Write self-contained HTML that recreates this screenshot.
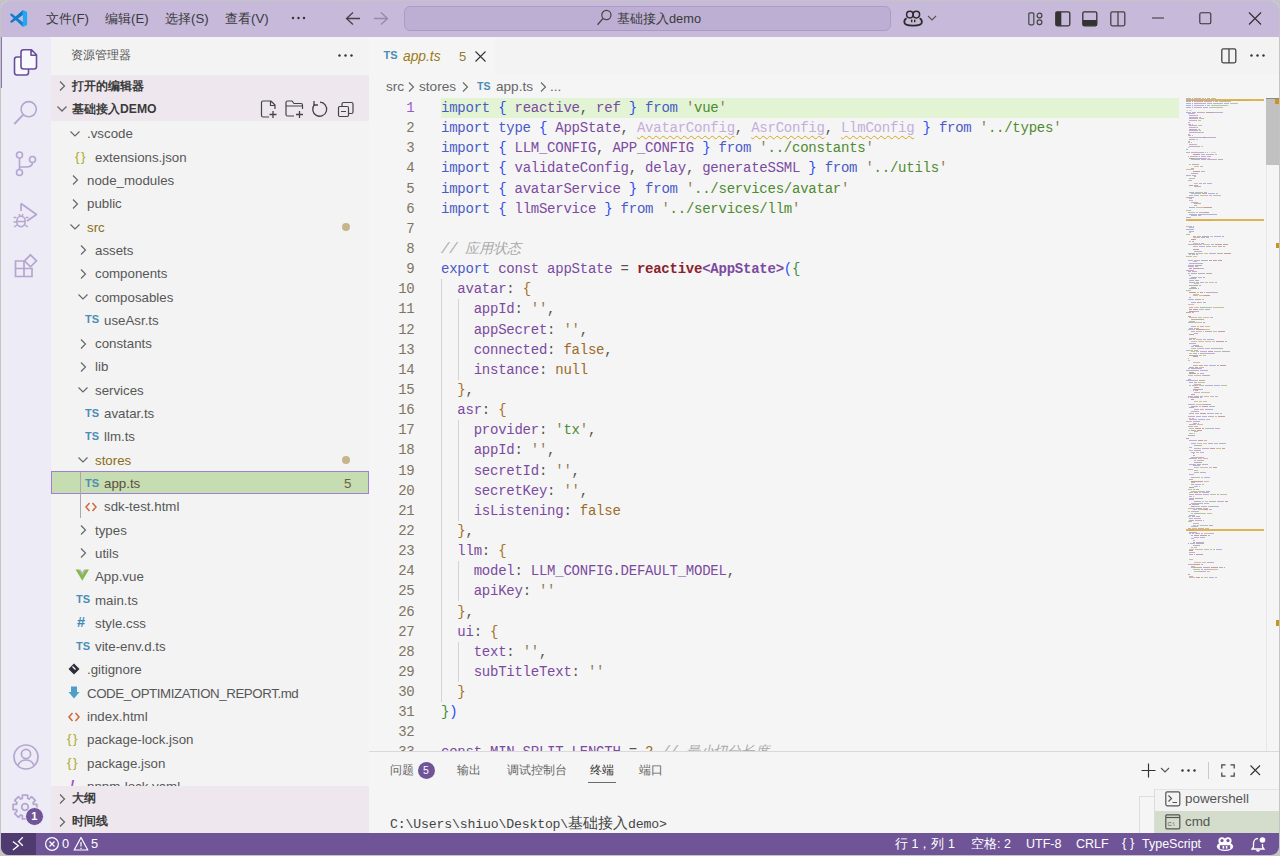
<!DOCTYPE html><html><head><meta charset="utf-8"><style>
*{margin:0;padding:0;box-sizing:border-box}
html,body{width:1280px;height:856px;overflow:hidden;background:#c4c4c4}
body{font-family:"Liberation Sans",sans-serif;position:relative;color:#3b3b3b}
.a{position:absolute}
svg{position:absolute;overflow:visible}
.win{position:absolute;left:0;top:0;width:1280px;height:856px;clip-path:inset(1px 1px 1px 1px round 8px);background:#f5f5f5}
.t{position:absolute;white-space:nowrap}
.row{position:absolute;left:51px;width:318px;height:23.3px;line-height:23.3px;font-size:13.3px;color:#424242;white-space:nowrap}
.code{position:absolute;font-family:"Liberation Mono",monospace;font-size:14px;letter-spacing:-0.24px;white-space:pre;height:20.14px;line-height:20.14px}
.ln{position:absolute;left:368px;width:46px;text-align:right;font-family:"Liberation Mono",monospace;font-size:14px;letter-spacing:-0.24px;color:#7f7461;height:20.14px;line-height:20.14px}
</style></head><body>
<div class="win">
<div class="a" style="left:0px;top:0px;width:1280px;height:37px;background:#c6b9da;"></div>
<div class="a" style="left:0px;top:37px;width:50.5px;height:796px;background:#edebf5;"></div>
<div class="a" style="left:50.5px;top:37px;width:318.0px;height:796px;background:#f3f3f3;"></div>
<div class="a" style="left:368.5px;top:37px;width:911.5px;height:37px;background:#f3f3f3;"></div>
<div class="a" style="left:368.5px;top:37px;width:126.5px;height:37px;background:#f5f5f5;"></div>
<div class="a" style="left:368.5px;top:74px;width:911.5px;height:677px;background:#f5f5f5;"></div>
<div class="a" style="left:368.5px;top:751px;width:911.5px;height:82px;background:#f5f5f5;"></div>
<div class="a" style="left:368.5px;top:751px;width:911.5px;height:1px;background:#d9d9d9;"></div>
<div class="a" style="left:0px;top:833px;width:1280px;height:23px;background:#6f5497;"></div>
<div class="a" style="left:0px;top:833px;width:36px;height:23px;background:#4f3b70;"></div>
<svg style="left:10px;top:10px;" width="18" height="18" viewBox="0 0 18 18"><path d="M12.9 0 L12.9 4.9 L1.8 12.7 Q0.6 13 0.1 11.6 Z" fill="#1178c8"/>
<path d="M1.8 3.6 Q0.6 3.4 0.1 5 L12.9 16.8 V12.3 Z" fill="#0e80d2"/>
<path d="M12.9 0 L17.1 2.1 V14.9 L12.9 17 Z" fill="#22a7f2"/></svg>
<div class="t" style="left:46px;top:10.260000000000002px;height:18.479999999999997px;line-height:18.479999999999997px;font-size:13.2px;color:#3a3a3a;">文件(F)</div>
<div class="t" style="left:105px;top:10.260000000000002px;height:18.479999999999997px;line-height:18.479999999999997px;font-size:13.2px;color:#3a3a3a;">编辑(E)</div>
<div class="t" style="left:165px;top:10.260000000000002px;height:18.479999999999997px;line-height:18.479999999999997px;font-size:13.2px;color:#3a3a3a;">选择(S)</div>
<div class="t" style="left:225px;top:10.260000000000002px;height:18.479999999999997px;line-height:18.479999999999997px;font-size:13.2px;color:#3a3a3a;">查看(V)</div>
<svg style="left:290px;top:15px;" width="18" height="6" viewBox="0 0 18 6"><circle cx="3" cy="3" r="1.2" fill="#333"/><circle cx="8.5" cy="3" r="1.2" fill="#333"/><circle cx="14" cy="3" r="1.2" fill="#333"/></svg>
<svg style="left:344px;top:11px;" width="18" height="15" viewBox="0 0 18 15"><path d="M9 1.5 L2.5 7.5 L9 13.5 M2.5 7.5 H16" stroke="#444" stroke-width="1.3" fill="none"/></svg>
<svg style="left:372px;top:11px;" width="18" height="15" viewBox="0 0 18 15"><path d="M9 1.5 L15.5 7.5 L9 13.5 M15.5 7.5 H2" stroke="#958aa8" stroke-width="1.3" fill="none"/></svg>
<div class="a" style="left:403.5px;top:6px;width:487.5px;height:24.5px;background:#bdafd3;border:1px solid #ab9bc4;border-radius:6px;"></div>
<svg style="left:596px;top:10px;" width="18" height="17" viewBox="0 0 18 17"><circle cx="10.4" cy="5" r="4.6" stroke="#444" stroke-width="1.2" fill="none"/><path d="M7.1 8.4 L1.5 14.8" stroke="#444" stroke-width="1.3"/></svg>
<div class="t" style="left:617px;top:10.040000000000001px;height:17.919999999999998px;line-height:17.919999999999998px;font-size:12.8px;color:#3a3a3a;">基础接入demo</div>
<svg style="left:903px;top:10px;" width="20" height="17" viewBox="0 0 20 17"><circle cx="6.9" cy="4.6" r="3.3" stroke="#2b2b2b" stroke-width="1.5" fill="none"/><circle cx="13.3" cy="4.6" r="3.3" stroke="#2b2b2b" stroke-width="1.5" fill="none"/>
<path d="M3.6 8.2 C1.8 9 1.3 10.5 1.3 12 C1.3 14.5 5 15.6 10.1 15.6 C15.2 15.6 18.9 14.5 18.9 12 C18.9 10.5 18.4 9 16.6 8.2" stroke="#2b2b2b" stroke-width="1.8" fill="none"/>
<rect x="8" y="9.6" width="1.4" height="2.6" fill="#2b2b2b"/><rect x="11" y="9.6" width="1.4" height="2.6" fill="#2b2b2b"/></svg>
<svg style="left:927px;top:14px;" width="10" height="8" viewBox="0 0 10 8"><path d="M1 2 L5 6 L9 2" stroke="#555" stroke-width="1.1" fill="none"/></svg>
<svg style="left:1028px;top:12px;" width="16" height="14" viewBox="0 0 16 14"><rect x="0.8" y="0.8" width="5" height="12" rx="1.2" stroke="#444" stroke-width="1.2" fill="none"/><circle cx="11.5" cy="3.5" r="2.4" stroke="#444" stroke-width="1.2" fill="none"/><circle cx="11.5" cy="10.3" r="2.4" stroke="#444" stroke-width="1.2" fill="none"/></svg>
<svg style="left:1055px;top:11px;" width="16" height="16" viewBox="0 0 16 16"><rect x="0.8" y="0.8" width="14" height="14" rx="1.5" stroke="#333" stroke-width="1.3" fill="none"/><rect x="0.8" y="0.8" width="5.5" height="14" fill="#333"/></svg>
<svg style="left:1082px;top:11px;" width="16" height="16" viewBox="0 0 16 16"><rect x="0.8" y="0.8" width="14" height="14" rx="1.5" stroke="#333" stroke-width="1.3" fill="none"/><rect x="0.8" y="9" width="14" height="5.8" fill="#333"/></svg>
<svg style="left:1110px;top:11px;" width="16" height="16" viewBox="0 0 16 16"><rect x="0.8" y="0.8" width="14" height="14" rx="1.5" stroke="#444" stroke-width="1.3" fill="none"/><path d="M8 1 V15" stroke="#444" stroke-width="1.3"/></svg>
<svg style="left:1152px;top:17px;" width="13" height="2" viewBox="0 0 13 2"><path d="M0 1 H12" stroke="#333" stroke-width="1.1"/></svg>
<svg style="left:1199px;top:12px;" width="13" height="13" viewBox="0 0 13 13"><rect x="0.8" y="0.8" width="11" height="11" rx="1.5" stroke="#333" stroke-width="1.1" fill="none"/></svg>
<svg style="left:1248px;top:12px;" width="14" height="13" viewBox="0 0 14 13"><path d="M1 0.5 L13 12.5 M13 0.5 L1 12.5" stroke="#333" stroke-width="1.2"/></svg>
<div class="a" style="left:1px;top:37px;width:1.2000000000000002px;height:51px;background:#8a76ad;"></div>
<svg style="left:12px;top:48px;" width="28" height="30" viewBox="0 0 28 30"><path d="M9 9 H5 Q2.5 9 2.5 11.5 V24.5 Q2.5 27 5 27 H14 Q16.5 27 16.5 24.5 V21" stroke="#6b4e9b" stroke-width="1.6" fill="#f9f8fc"/><path d="M11.5 1.8 H19.5 L24.5 6.8 V18.5 Q24.5 21 22 21 H11.5 Q9 21 9 18.5 V4.3 Q9 1.8 11.5 1.8 Z M19 2 V7.3 H24.3" stroke="#6b4e9b" stroke-width="1.6" fill="#f9f8fc" stroke-linejoin="round"/></svg>
<svg style="left:12px;top:97px;" width="28" height="30" viewBox="0 0 28 30"><circle cx="16.7" cy="12.2" r="7.6" stroke="#b4a6d0" stroke-width="1.6" fill="none"/><path d="M11.3 17.7 L2.3 27" stroke="#b4a6d0" stroke-width="1.8"/></svg>
<svg style="left:14px;top:150px;" width="24" height="28" viewBox="0 0 24 28"><circle cx="5.5" cy="5" r="3" stroke="#b4a6d0" stroke-width="1.6" fill="none"/><circle cx="5.5" cy="22.5" r="3" stroke="#b4a6d0" stroke-width="1.6" fill="none"/><circle cx="18.5" cy="9.5" r="3" stroke="#b4a6d0" stroke-width="1.6" fill="none"/><path d="M5.5 8 V19.5 M18.5 12.5 Q18.5 17 12 17 H5.5" stroke="#b4a6d0" stroke-width="1.6" fill="none"/></svg>
<svg style="left:12px;top:202px;" width="28" height="28" viewBox="0 0 28 28"><path d="M9 1.5 L24.5 12.5 L15 19 M9 1.5 V9" stroke="#b4a6d0" stroke-width="1.7" fill="none" stroke-linejoin="round"/><ellipse cx="9" cy="19.5" rx="4.2" ry="5.2" stroke="#b4a6d0" stroke-width="1.6" fill="none"/><path d="M1.5 15.5 H4.5 M1.5 20 H4.8 M2 25 L5 23 M13.5 15.5 H16.5 M5 19.5 H13 M7 12 L8 14.5 M11 12 L10 14.5 M13 23 L16 25" stroke="#b4a6d0" stroke-width="1.5" fill="none"/></svg>
<svg style="left:13px;top:253px;" width="26" height="26" viewBox="0 0 26 26"><path d="M2.5 8 H11 V23.5 H2.5 Z M2.5 15.5 H19 V23.5 H11 M11 15.5 V8" stroke="#b4a6d0" stroke-width="1.7" fill="none"/><path d="M17.5 1.8 L23.5 7.8 L17.5 13.8 L11.5 7.8 Z" stroke="#b4a6d0" stroke-width="1.7" fill="none"/></svg>
<svg style="left:12px;top:743px;" width="28" height="28" viewBox="0 0 28 28"><circle cx="14" cy="14" r="12" stroke="#b4a6d0" stroke-width="1.7" fill="none"/><circle cx="14" cy="11" r="4.6" stroke="#b4a6d0" stroke-width="1.7" fill="none"/><path d="M6 22.5 Q8 17 14 17 Q20 17 22 22.5" stroke="#b4a6d0" stroke-width="1.7" fill="none"/></svg>
<svg style="left:12px;top:794px;" width="26" height="26" viewBox="0 0 26 26"><path d="M21.60 10.34 L24.91 10.34 L24.91 15.66 L21.60 15.66 L20.96 17.20 L23.30 19.54 L19.54 23.30 L17.20 20.96 L15.66 21.60 L15.66 24.91 L10.34 24.91 L10.34 21.60 L8.80 20.96 L6.46 23.30 L2.70 19.54 L5.04 17.20 L4.40 15.66 L1.09 15.66 L1.09 10.34 L4.40 10.34 L5.04 8.80 L2.70 6.46 L6.46 2.70 L8.80 5.04 L10.34 4.40 L10.34 1.09 L15.66 1.09 L15.66 4.40 L17.20 5.04 L19.54 2.70 L23.30 6.46 L20.96 8.80 Z" stroke="#b4a6d0" stroke-width="1.7" fill="none" stroke-linejoin="round"/><circle cx="13" cy="13" r="3.3" stroke="#b4a6d0" stroke-width="1.7" fill="none"/></svg>
<div class="a" style="left:24.5px;top:806.5px;width:19.5px;height:19.5px;border-radius:50%;background:#6f5497;border:1.6px solid #edebf5;color:#fff;font-size:11px;font-weight:bold;text-align:center;line-height:16.3px">1</div>
<div class="t" style="left:71px;top:47.32px;height:17.36px;line-height:17.36px;font-size:12.4px;color:#555;">资源管理器</div>
<svg style="left:337px;top:53px;" width="18" height="5" viewBox="0 0 18 5"><circle cx="2.5" cy="2.5" r="1.2" fill="#333"/><circle cx="8.5" cy="2.5" r="1.2" fill="#333"/><circle cx="14.5" cy="2.5" r="1.2" fill="#333"/></svg>
<div class="a" style="left:50.5px;top:74.7px;width:318.0px;height:46.099999999999994px;background:#eee8ee;"></div>
<div class="a" style="left:50.5px;top:786px;width:318.0px;height:47px;background:#eee8ee;"></div>
<svg style="left:58px;top:80.2px;" width="8" height="12" viewBox="0 0 8 12"><path d="M2 1.5 L6.5 6 L2 10.5" stroke="#666" stroke-width="1.25" fill="none"/></svg>
<div class="t" style="left:72px;top:77.66px;height:17.08px;line-height:17.08px;font-size:12.2px;color:#3b3b3b;font-weight:bold">打开的编辑器</div>
<svg style="left:56px;top:105.3px;" width="12" height="8" viewBox="0 0 12 8"><path d="M1.5 1.5 L6 6 L10.5 1.5" stroke="#666" stroke-width="1.25" fill="none"/></svg>
<div class="t" style="left:72px;top:100.75999999999999px;height:17.08px;line-height:17.08px;font-size:12.2px;color:#3b3b3b;font-weight:bold">基础接入DEMO</div>
<svg style="left:260px;top:100px;" width="18" height="19" viewBox="0 0 18 19"><path d="M11 1 H3 Q1.5 1 1.5 2.5 V15.5 Q1.5 17 3 17 H9 M11 1 L15 5 V9 M10.5 1.2 V5.5 H15" stroke="#444" stroke-width="1.2" fill="none"/><path d="M13 11 V18 M9.5 14.5 H16.5" stroke="#444" stroke-width="1.3"/></svg>
<svg style="left:285px;top:100px;" width="20" height="19" viewBox="0 0 20 19"><path d="M9 16 H2.5 Q1 16 1 14.5 V2.5 Q1 1 2.5 1 H7 L9 3.5 H16 Q17.5 3.5 17.5 5 V9 M1 6 H17" stroke="#444" stroke-width="1.2" fill="none"/><path d="M14.5 11 V18 M11 14.5 H18" stroke="#444" stroke-width="1.3"/></svg>
<svg style="left:311px;top:100px;" width="18" height="19" viewBox="0 0 18 19"><path d="M3.5 4.5 A7 7 0 1 0 9 2.2" stroke="#444" stroke-width="1.3" fill="none"/><path d="M3 1 V5 H7" stroke="#444" stroke-width="1.3" fill="none"/></svg>
<svg style="left:337px;top:101px;" width="18" height="17" viewBox="0 0 18 17"><rect x="1.5" y="5.5" width="10" height="10" rx="1.2" stroke="#444" stroke-width="1.2" fill="none"/><path d="M5 5.5 V3 Q5 1.5 6.5 1.5 H14.5 Q16 1.5 16 3 V11 Q16 12.5 14.5 12.5 H11.5 M4 10.5 H9" stroke="#444" stroke-width="1.2" fill="none"/></svg>
<div class="a" style="left:0;top:120.8px;width:369px;height:665.2px;overflow:hidden">
<svg style="left:69px;top:9.054999999999993px" width="12" height="8" viewBox="0 0 12 8"><path d="M1.5 1.5 L6 6 L10.5 1.5" stroke="#666" stroke-width="1.15" fill="none"/></svg>
<div class="t" style="left:87px;top:1.5549999999999926px;height:23px;line-height:23px;font-size:13.3px;color:#575757;">.vscode</div>
<div class="t" style="left:75px;top:26.864999999999995px;height:18px;line-height:18px;font-size:13.5px;color:#b0aa1e;letter-spacing:1.6px">{}</div>
<div class="t" style="left:95px;top:24.864999999999995px;height:23px;line-height:23px;font-size:13.3px;color:#575757;">extensions.json</div>
<svg style="left:71px;top:53.675px" width="8" height="12" viewBox="0 0 8 12"><path d="M2 1.5 L6.5 6 L2 10.5" stroke="#666" stroke-width="1.15" fill="none"/></svg>
<div class="t" style="left:87px;top:48.175px;height:23px;line-height:23px;font-size:13.3px;color:#575757;">node_modules</div>
<svg style="left:71px;top:76.985px" width="8" height="12" viewBox="0 0 8 12"><path d="M2 1.5 L6.5 6 L2 10.5" stroke="#666" stroke-width="1.15" fill="none"/></svg>
<div class="t" style="left:87px;top:71.485px;height:23px;line-height:23px;font-size:13.3px;color:#575757;">public</div>
<svg style="left:69px;top:102.295px" width="12" height="8" viewBox="0 0 12 8"><path d="M1.5 1.5 L6 6 L10.5 1.5" stroke="#666" stroke-width="1.15" fill="none"/></svg>
<div class="t" style="left:87px;top:94.795px;height:23px;line-height:23px;font-size:13.3px;color:#8b6d16;">src</div>
<div class="a" style="left:342px;top:102.295px;width:8px;height:8px;border-radius:50%;background:#c6b48a"></div>
<svg style="left:79px;top:123.60500000000002px" width="8" height="12" viewBox="0 0 8 12"><path d="M2 1.5 L6.5 6 L2 10.5" stroke="#666" stroke-width="1.15" fill="none"/></svg>
<div class="t" style="left:95px;top:118.10500000000002px;height:23px;line-height:23px;font-size:13.3px;color:#575757;">assets</div>
<svg style="left:79px;top:146.91499999999996px" width="8" height="12" viewBox="0 0 8 12"><path d="M2 1.5 L6.5 6 L2 10.5" stroke="#666" stroke-width="1.15" fill="none"/></svg>
<div class="t" style="left:95px;top:141.41499999999996px;height:23px;line-height:23px;font-size:13.3px;color:#575757;">components</div>
<svg style="left:77px;top:172.22499999999997px" width="12" height="8" viewBox="0 0 12 8"><path d="M1.5 1.5 L6 6 L10.5 1.5" stroke="#666" stroke-width="1.15" fill="none"/></svg>
<div class="t" style="left:95px;top:164.72499999999997px;height:23px;line-height:23px;font-size:13.3px;color:#575757;">composables</div>
<div class="t" style="left:85px;top:190.53499999999997px;height:16px;line-height:16px;font-size:11px;color:#4d8cb5;font-weight:bold">TS</div>
<div class="t" style="left:104px;top:188.03499999999997px;height:23px;line-height:23px;font-size:13.3px;color:#575757;">useAsr.ts</div>
<svg style="left:79px;top:216.84499999999997px" width="8" height="12" viewBox="0 0 8 12"><path d="M2 1.5 L6.5 6 L2 10.5" stroke="#666" stroke-width="1.15" fill="none"/></svg>
<div class="t" style="left:95px;top:211.34499999999997px;height:23px;line-height:23px;font-size:13.3px;color:#575757;">constants</div>
<svg style="left:79px;top:240.15499999999997px" width="8" height="12" viewBox="0 0 8 12"><path d="M2 1.5 L6.5 6 L2 10.5" stroke="#666" stroke-width="1.15" fill="none"/></svg>
<div class="t" style="left:95px;top:234.65499999999997px;height:23px;line-height:23px;font-size:13.3px;color:#575757;">lib</div>
<svg style="left:77px;top:265.4649999999999px" width="12" height="8" viewBox="0 0 12 8"><path d="M1.5 1.5 L6 6 L10.5 1.5" stroke="#666" stroke-width="1.15" fill="none"/></svg>
<div class="t" style="left:95px;top:257.9649999999999px;height:23px;line-height:23px;font-size:13.3px;color:#575757;">services</div>
<div class="t" style="left:85px;top:283.7749999999999px;height:16px;line-height:16px;font-size:11px;color:#4d8cb5;font-weight:bold">TS</div>
<div class="t" style="left:104px;top:281.2749999999999px;height:23px;line-height:23px;font-size:13.3px;color:#575757;">avatar.ts</div>
<div class="t" style="left:85px;top:307.0849999999999px;height:16px;line-height:16px;font-size:11px;color:#4d8cb5;font-weight:bold">TS</div>
<div class="t" style="left:104px;top:304.5849999999999px;height:23px;line-height:23px;font-size:13.3px;color:#575757;">llm.ts</div>
<svg style="left:77px;top:335.3949999999999px" width="12" height="8" viewBox="0 0 12 8"><path d="M1.5 1.5 L6 6 L10.5 1.5" stroke="#666" stroke-width="1.15" fill="none"/></svg>
<div class="t" style="left:95px;top:327.8949999999999px;height:23px;line-height:23px;font-size:13.3px;color:#8b6d16;">stores</div>
<div class="a" style="left:342px;top:335.3949999999999px;width:8px;height:8px;border-radius:50%;background:#c6b48a"></div>
<div class="a" style="left:51px;top:350.54999999999995px;width:317.5px;height:22.6px;background:#c6dcb1;border:1px solid #9e80d6"></div>
<div class="t" style="left:85px;top:353.7049999999999px;height:16px;line-height:16px;font-size:11px;color:#4d8cb5;font-weight:bold">TS</div>
<div class="t" style="left:104px;top:351.2049999999999px;height:23px;line-height:23px;font-size:13.3px;color:#5b4f3c;">app.ts</div>
<div class="t" style="left:344px;top:351.2049999999999px;height:23px;line-height:23px;font-size:13.3px;color:#6b5f40">5</div>
<svg style="left:85px;top:381.01499999999993px" width="12" height="10" viewBox="0 0 12 10"><path d="M4.5 1 L1 5 L4.5 9 M7.5 1 L11 5 L7.5 9" stroke="#d0673a" stroke-width="1.5" fill="none"/></svg>
<div class="t" style="left:104px;top:374.51499999999993px;height:23px;line-height:23px;font-size:13.3px;color:#575757;">sdk-test.html</div>
<svg style="left:79px;top:403.325px" width="8" height="12" viewBox="0 0 8 12"><path d="M2 1.5 L6.5 6 L2 10.5" stroke="#666" stroke-width="1.15" fill="none"/></svg>
<div class="t" style="left:95px;top:397.825px;height:23px;line-height:23px;font-size:13.3px;color:#575757;">types</div>
<svg style="left:79px;top:426.63499999999993px" width="8" height="12" viewBox="0 0 8 12"><path d="M2 1.5 L6.5 6 L2 10.5" stroke="#666" stroke-width="1.15" fill="none"/></svg>
<div class="t" style="left:95px;top:421.13499999999993px;height:23px;line-height:23px;font-size:13.3px;color:#575757;">utils</div>
<svg style="left:75px;top:447.945px;transform:scale(1.12);transform-origin:0 0" width="13" height="11" viewBox="0 0 13 11"><path d="M0.5 0.5 H3.5 L6.5 5.5 L9.5 0.5 H12.5 L6.5 10.5 Z" fill="#86b949"/><path d="M3.5 0.5 H5 L6.5 3 L8 0.5 H9.5 L6.5 5.5 Z" fill="#34495e" opacity="0.35"/></svg>
<div class="t" style="left:95px;top:444.445px;height:23px;line-height:23px;font-size:13.3px;color:#575757;">App.vue</div>
<div class="t" style="left:76px;top:470.25499999999994px;height:16px;line-height:16px;font-size:11px;color:#4d8cb5;font-weight:bold">TS</div>
<div class="t" style="left:95px;top:467.75499999999994px;height:23px;line-height:23px;font-size:13.3px;color:#575757;">main.ts</div>
<div class="t" style="left:77px;top:493.565px;height:16px;line-height:16px;font-size:14.5px;color:#4289b9;font-weight:bold">#</div>
<div class="t" style="left:95px;top:491.065px;height:23px;line-height:23px;font-size:13.3px;color:#575757;">style.css</div>
<div class="t" style="left:76px;top:516.875px;height:16px;line-height:16px;font-size:11px;color:#4d8cb5;font-weight:bold">TS</div>
<div class="t" style="left:95px;top:514.375px;height:23px;line-height:23px;font-size:13.3px;color:#575757;">vite-env.d.ts</div>
<svg style="left:68px;top:542.1850000000001px" width="12" height="13" viewBox="0 0 12 13"><path d="M6 0.5 L11.5 6 L6 11.5 L0.5 6 Z" fill="#2d2d3a"/><path d="M4.5 3.5 L7.5 6.5" stroke="#fff" stroke-width="1.2"/></svg>
<div class="t" style="left:87px;top:537.6850000000001px;height:23px;line-height:23px;font-size:13.3px;color:#575757;">.gitignore</div>
<svg style="left:68px;top:565.495px" width="12" height="14" viewBox="0 0 12 14"><path d="M3 0.5 H9 V6 H11.5 L6 12.5 L0.5 6 H3 Z" fill="#4d9fc8"/></svg>
<div class="t" style="left:87px;top:560.995px;height:23px;line-height:23px;font-size:13.3px;color:#575757;letter-spacing:-0.42px;">CODE_OPTIMIZATION_REPORT.md</div>
<svg style="left:68px;top:590.8050000000001px" width="12" height="10" viewBox="0 0 12 10"><path d="M4.5 1 L1 5 L4.5 9 M7.5 1 L11 5 L7.5 9" stroke="#d0673a" stroke-width="1.5" fill="none"/></svg>
<div class="t" style="left:87px;top:584.3050000000001px;height:23px;line-height:23px;font-size:13.3px;color:#575757;">index.html</div>
<div class="t" style="left:67px;top:609.615px;height:18px;line-height:18px;font-size:13.5px;color:#b0aa1e;letter-spacing:1.6px">{}</div>
<div class="t" style="left:87px;top:607.615px;height:23px;line-height:23px;font-size:13.3px;color:#575757;">package-lock.json</div>
<div class="t" style="left:67px;top:632.9250000000001px;height:18px;line-height:18px;font-size:13.5px;color:#b0aa1e;letter-spacing:1.6px">{}</div>
<div class="t" style="left:87px;top:630.9250000000001px;height:23px;line-height:23px;font-size:13.3px;color:#575757;">package.json</div>
<div class="t" style="left:70px;top:655.735px;height:16px;line-height:16px;font-size:13px;color:#a04fc8;font-weight:bold;font-style:italic">!</div>
<div class="t" style="left:87px;top:654.235px;height:23px;line-height:23px;font-size:13.3px;color:#575757;">pnpm-lock.yaml</div>
<div class="a" style="left:80px;top:351.04999999999995px;width:1px;height:46.62px;background:#a9a9a9"></div>
</div>
<svg style="left:58px;top:792.5px;" width="8" height="12" viewBox="0 0 8 12"><path d="M2 1.5 L6.5 6 L2 10.5" stroke="#666" stroke-width="1.25" fill="none"/></svg>
<div class="t" style="left:72px;top:790.26px;height:17.08px;line-height:17.08px;font-size:12.2px;color:#3b3b3b;font-weight:bold">大纲</div>
<svg style="left:58px;top:816px;" width="8" height="12" viewBox="0 0 8 12"><path d="M2 1.5 L6.5 6 L2 10.5" stroke="#666" stroke-width="1.25" fill="none"/></svg>
<div class="t" style="left:72px;top:813.46px;height:17.08px;line-height:17.08px;font-size:12.2px;color:#3b3b3b;font-weight:bold">时间线</div>
<div class="t" style="left:383.5px;top:48.3px;height:15.399999999999999px;line-height:15.399999999999999px;font-size:11px;color:#4d8cb5;font-weight:bold">TS</div>
<div class="t" style="left:403px;top:47.34px;height:19.32px;line-height:19.32px;font-size:13.8px;color:#9a7b17;font-style:italic">app.ts</div>
<div class="t" style="left:459px;top:47.9px;height:18.2px;line-height:18.2px;font-size:13px;color:#8f7a2e;">5</div>
<svg style="left:475px;top:51px;" width="11" height="11" viewBox="0 0 11 11"><path d="M0.5 0.5 L10.5 10.5 M10.5 0.5 L0.5 10.5" stroke="#333" stroke-width="1.1"/></svg>
<svg style="left:1221px;top:48px;" width="16" height="16" viewBox="0 0 16 16"><rect x="0.8" y="0.8" width="14" height="14" rx="1.5" stroke="#444" stroke-width="1.3" fill="none"/><path d="M8 1 V15" stroke="#444" stroke-width="1.3"/></svg>
<svg style="left:1249px;top:53px;" width="18" height="5" viewBox="0 0 18 5"><circle cx="2.5" cy="2.5" r="1.2" fill="#333"/><circle cx="8.5" cy="2.5" r="1.2" fill="#333"/><circle cx="14.5" cy="2.5" r="1.2" fill="#333"/></svg>
<div class="t" style="left:386px;top:77.48px;height:19.04px;line-height:19.04px;font-size:13.6px;color:#666;">src</div>
<svg style="left:407px;top:81px;" width="8" height="12" viewBox="0 0 8 12"><path d="M2 1.5 L6.5 6 L2 10.5" stroke="#666" stroke-width="1.1" fill="none"/></svg>
<div class="t" style="left:419px;top:77.48px;height:19.04px;line-height:19.04px;font-size:13.6px;color:#666;">stores</div>
<svg style="left:461px;top:81px;" width="8" height="12" viewBox="0 0 8 12"><path d="M2 1.5 L6.5 6 L2 10.5" stroke="#666" stroke-width="1.1" fill="none"/></svg>
<div class="t" style="left:477px;top:78.65px;height:14.7px;line-height:14.7px;font-size:10.5px;color:#4d8cb5;font-weight:bold">TS</div>
<div class="t" style="left:496px;top:77.48px;height:19.04px;line-height:19.04px;font-size:13.6px;color:#666;">app.ts</div>
<svg style="left:539px;top:81px;" width="8" height="12" viewBox="0 0 8 12"><path d="M2 1.5 L6.5 6 L2 10.5" stroke="#666" stroke-width="1.1" fill="none"/></svg>
<div class="t" style="left:550px;top:77.48px;height:19.04px;line-height:19.04px;font-size:13.6px;color:#666;">...</div>
<div class="a" style="left:441px;top:98.0px;width:738px;height:20.14px;background:#e2f4d4;"></div>
<div class="a" style="left:368.5px;top:74px;width:817px;height:677px;overflow:hidden">
<div class="a" style="left:72.5px;top:205.26px;width:1px;height:422.94px;background:#d4d4d4"></div>
<div class="a" style="left:89.0px;top:225.39999999999998px;width:1px;height:80.56px;background:#d4d4d4"></div>
<div class="a" style="left:89.0px;top:346.24px;width:1px;height:100.7px;background:#d4d4d4"></div>
<div class="a" style="left:89.0px;top:487.22px;width:1px;height:40.28px;background:#d4d4d4"></div>
<div class="a" style="left:89.0px;top:567.78px;width:1px;height:40.28px;background:#d4d4d4"></div>
<div class="ln" style="left:0px;top:24.0px;color:#9b59d0">1</div>
<div class="code" style="left:72.5px;top:24.0px"><span style="color:#4a5bc6;">import </span><span style="color:#2f4cf0;">{ </span><span style="color:#7b4aa0;">reactive</span><span style="color:#555;">, </span><span style="color:#7b4aa0;">ref</span><span style="color:#2f4cf0;"> } </span><span style="color:#4a5bc6;">from </span><span style="color:#8f7b55;">&#x27;</span><span style="color:#4f8a2f;">vue</span><span style="color:#8f7b55;">&#x27;</span></div>
<div class="ln" style="left:0px;top:44.14px;color:#7f7461">2</div>
<div class="code" style="left:72.5px;top:44.14px"><span style="color:#4a5bc6;">import </span><span style="color:#4a5bc6;">type </span><span style="color:#2f4cf0;">{ </span><span style="color:#7b4aa0;">AppState</span><span style="color:#555;">, </span><span style="color:#c4aedb;text-decoration:underline wavy #d9a422;text-decoration-thickness:1px;text-underline-offset:3px">AvatarConfig</span><span style="color:#555;">, </span><span style="color:#c4aedb;text-decoration:underline wavy #d9a422;text-decoration-thickness:1px;text-underline-offset:3px">AsrConfig</span><span style="color:#555;">, </span><span style="color:#c4aedb;text-decoration:underline wavy #d9a422;text-decoration-thickness:1px;text-underline-offset:3px">LlmConfig</span><span style="color:#2f4cf0;"> } </span><span style="color:#4a5bc6;">from </span><span style="color:#8f7b55;">&#x27;</span><span style="color:#4f8a2f;">../types</span><span style="color:#8f7b55;">&#x27;</span></div>
<div class="ln" style="left:0px;top:64.28px;color:#7f7461">3</div>
<div class="code" style="left:72.5px;top:64.28px"><span style="color:#4a5bc6;">import </span><span style="color:#2f4cf0;">{ </span><span style="color:#7b4aa0;">LLM_CONFIG</span><span style="color:#555;">, </span><span style="color:#7b4aa0;">APP_CONFIG</span><span style="color:#2f4cf0;"> } </span><span style="color:#4a5bc6;">from </span><span style="color:#8f7b55;">&#x27;</span><span style="color:#4f8a2f;">../constants</span><span style="color:#8f7b55;">&#x27;</span></div>
<div class="ln" style="left:0px;top:84.42000000000002px;color:#7f7461">4</div>
<div class="code" style="left:72.5px;top:84.42000000000002px"><span style="color:#4a5bc6;">import </span><span style="color:#2f4cf0;">{ </span><span style="color:#7b4aa0;">validateConfig</span><span style="color:#555;">, </span><span style="color:#7b4aa0;">delay</span><span style="color:#555;">, </span><span style="color:#7b4aa0;">generateSSML</span><span style="color:#2f4cf0;"> } </span><span style="color:#4a5bc6;">from </span><span style="color:#8f7b55;">&#x27;</span><span style="color:#4f8a2f;">../utils</span><span style="color:#8f7b55;">&#x27;</span></div>
<div class="ln" style="left:0px;top:104.56px;color:#7f7461">5</div>
<div class="code" style="left:72.5px;top:104.56px"><span style="color:#4a5bc6;">import </span><span style="color:#2f4cf0;">{ </span><span style="color:#7b4aa0;">avatarService</span><span style="color:#2f4cf0;"> } </span><span style="color:#4a5bc6;">from </span><span style="color:#8f7b55;">&#x27;</span><span style="color:#4f8a2f;">../services/avatar</span><span style="color:#8f7b55;">&#x27;</span></div>
<div class="ln" style="left:0px;top:124.69999999999999px;color:#7f7461">6</div>
<div class="code" style="left:72.5px;top:124.69999999999999px"><span style="color:#4a5bc6;">import </span><span style="color:#2f4cf0;">{ </span><span style="color:#7b4aa0;">llmService</span><span style="color:#2f4cf0;"> } </span><span style="color:#4a5bc6;">from </span><span style="color:#8f7b55;">&#x27;</span><span style="color:#4f8a2f;">../services/llm</span><span style="color:#8f7b55;">&#x27;</span></div>
<div class="ln" style="left:0px;top:144.84px;color:#7f7461">7</div>
<div class="code" style="left:72.5px;top:144.84px"></div>
<div class="ln" style="left:0px;top:164.98000000000002px;color:#7f7461">8</div>
<div class="code" style="left:72.5px;top:164.98000000000002px"><span style="color:#a9a9a9;font-style:italic">// 应用状态</span></div>
<div class="ln" style="left:0px;top:185.12px;color:#7f7461">9</div>
<div class="code" style="left:72.5px;top:185.12px"><span style="color:#4a5bc6;">export </span><span style="color:#7b4aa0;">const </span><span style="color:#7b4aa0;">appState</span><span style="color:#555;"> = </span><span style="color:#8c1f2f;font-weight:bold">reactive</span><span style="color:#7b4aa0;font-weight:bold">&lt;</span><span style="color:#7b4aa0;font-weight:bold">AppState</span><span style="color:#7b4aa0;font-weight:bold">&gt;</span><span style="color:#2f4cf0;">(</span><span style="color:#3f8f3a;">{</span></div>
<div class="ln" style="left:0px;top:205.26px;color:#7f7461">10</div>
<div class="code" style="left:72.5px;top:205.26px"><span style="color:#7b4aa0;">  avatar</span><span style="color:#555;">: </span><span style="color:#a8701f;">{</span></div>
<div class="ln" style="left:0px;top:225.39999999999998px;color:#7f7461">11</div>
<div class="code" style="left:72.5px;top:225.39999999999998px"><span style="color:#7b4aa0;">    appId</span><span style="color:#555;">: </span><span style="color:#8f7b55;">&#x27;&#x27;</span><span style="color:#555;">,</span></div>
<div class="ln" style="left:0px;top:245.54000000000002px;color:#7f7461">12</div>
<div class="code" style="left:72.5px;top:245.54000000000002px"><span style="color:#7b4aa0;">    appSecret</span><span style="color:#555;">: </span><span style="color:#8f7b55;">&#x27;&#x27;</span><span style="color:#555;">,</span></div>
<div class="ln" style="left:0px;top:265.68px;color:#7f7461">13</div>
<div class="code" style="left:72.5px;top:265.68px"><span style="color:#7b4aa0;">    connected</span><span style="color:#555;">: </span><span style="color:#9b6b2b;">false</span><span style="color:#555;">,</span></div>
<div class="ln" style="left:0px;top:285.82px;color:#7f7461">14</div>
<div class="code" style="left:72.5px;top:285.82px"><span style="color:#7b4aa0;">    instance</span><span style="color:#555;">: </span><span style="color:#9b6b2b;">null</span></div>
<div class="ln" style="left:0px;top:305.96000000000004px;color:#7f7461">15</div>
<div class="code" style="left:72.5px;top:305.96000000000004px"><span style="color:#a8701f;">  }</span><span style="color:#555;">,</span></div>
<div class="ln" style="left:0px;top:326.1px;color:#7f7461">16</div>
<div class="code" style="left:72.5px;top:326.1px"><span style="color:#7b4aa0;">  asr</span><span style="color:#555;">: </span><span style="color:#a8701f;">{</span></div>
<div class="ln" style="left:0px;top:346.24px;color:#7f7461">17</div>
<div class="code" style="left:72.5px;top:346.24px"><span style="color:#7b4aa0;">    provider</span><span style="color:#555;">: </span><span style="color:#8f7b55;">&#x27;</span><span style="color:#4f8a2f;">tx</span><span style="color:#8f7b55;">&#x27;</span><span style="color:#555;">,</span></div>
<div class="ln" style="left:0px;top:366.38px;color:#7f7461">18</div>
<div class="code" style="left:72.5px;top:366.38px"><span style="color:#7b4aa0;">    appId</span><span style="color:#555;">: </span><span style="color:#8f7b55;">&#x27;&#x27;</span><span style="color:#555;">,</span></div>
<div class="ln" style="left:0px;top:386.52px;color:#7f7461">19</div>
<div class="code" style="left:72.5px;top:386.52px"><span style="color:#7b4aa0;">    secretId</span><span style="color:#555;">: </span><span style="color:#8f7b55;">&#x27;&#x27;</span><span style="color:#555;">,</span></div>
<div class="ln" style="left:0px;top:406.66px;color:#7f7461">20</div>
<div class="code" style="left:72.5px;top:406.66px"><span style="color:#7b4aa0;">    secretKey</span><span style="color:#555;">: </span><span style="color:#8f7b55;">&#x27;&#x27;</span><span style="color:#555;">,</span></div>
<div class="ln" style="left:0px;top:426.8px;color:#7f7461">21</div>
<div class="code" style="left:72.5px;top:426.8px"><span style="color:#7b4aa0;">    isListening</span><span style="color:#555;">: </span><span style="color:#9b6b2b;">false</span></div>
<div class="ln" style="left:0px;top:446.94000000000005px;color:#7f7461">22</div>
<div class="code" style="left:72.5px;top:446.94000000000005px"><span style="color:#a8701f;">  }</span><span style="color:#555;">,</span></div>
<div class="ln" style="left:0px;top:467.08000000000004px;color:#7f7461">23</div>
<div class="code" style="left:72.5px;top:467.08000000000004px"><span style="color:#7b4aa0;">  llm</span><span style="color:#555;">: </span><span style="color:#a8701f;">{</span></div>
<div class="ln" style="left:0px;top:487.22px;color:#7f7461">24</div>
<div class="code" style="left:72.5px;top:487.22px"><span style="color:#7b4aa0;">    model</span><span style="color:#555;">: </span><span style="color:#7b4aa0;">LLM_CONFIG</span><span style="color:#555;">.</span><span style="color:#7b4aa0;">DEFAULT_MODEL</span><span style="color:#555;">,</span></div>
<div class="ln" style="left:0px;top:507.36px;color:#7f7461">25</div>
<div class="code" style="left:72.5px;top:507.36px"><span style="color:#7b4aa0;">    apiKey</span><span style="color:#555;">: </span><span style="color:#8f7b55;">&#x27;&#x27;</span></div>
<div class="ln" style="left:0px;top:527.5px;color:#7f7461">26</div>
<div class="code" style="left:72.5px;top:527.5px"><span style="color:#a8701f;">  }</span><span style="color:#555;">,</span></div>
<div class="ln" style="left:0px;top:547.64px;color:#7f7461">27</div>
<div class="code" style="left:72.5px;top:547.64px"><span style="color:#7b4aa0;">  ui</span><span style="color:#555;">: </span><span style="color:#a8701f;">{</span></div>
<div class="ln" style="left:0px;top:567.78px;color:#7f7461">28</div>
<div class="code" style="left:72.5px;top:567.78px"><span style="color:#7b4aa0;">    text</span><span style="color:#555;">: </span><span style="color:#8f7b55;">&#x27;&#x27;</span><span style="color:#555;">,</span></div>
<div class="ln" style="left:0px;top:587.9200000000001px;color:#7f7461">29</div>
<div class="code" style="left:72.5px;top:587.9200000000001px"><span style="color:#7b4aa0;">    subTitleText</span><span style="color:#555;">: </span><span style="color:#8f7b55;">&#x27;&#x27;</span></div>
<div class="ln" style="left:0px;top:608.0600000000001px;color:#7f7461">30</div>
<div class="code" style="left:72.5px;top:608.0600000000001px"><span style="color:#a8701f;">  }</span></div>
<div class="ln" style="left:0px;top:628.2px;color:#7f7461">31</div>
<div class="code" style="left:72.5px;top:628.2px"><span style="color:#3f8f3a;">}</span><span style="color:#2f4cf0;">)</span></div>
<div class="ln" style="left:0px;top:648.34px;color:#7f7461">32</div>
<div class="code" style="left:72.5px;top:648.34px"></div>
<div class="ln" style="left:0px;top:668.48px;color:#7f7461">33</div>
<div class="code" style="left:72.5px;top:668.48px"><span style="color:#7b4aa0;">const </span><span style="color:#7b4aa0;">MIN_SPLIT_LENGTH</span><span style="color:#555;"> = </span><span style="color:#9b6b2b;">2</span><span style="color:#a9a9a9;font-style:italic"> // 最小切分长度</span></div>
</div>
<div class="a" style="left:1266px;top:97.5px;width:1px;height:653.5px;background:#e6e6e6;"></div>
<div class="a" style="left:1266px;top:97.5px;width:13px;height:67.1px;background:#c1c1c1;"></div>
<div class="a" style="left:1266px;top:97.5px;width:13px;height:1.5px;background:#8a8a8a;"></div>
<div class="a" style="left:1186.00px;top:98.00px;width:5.04px;height:1.1px;background:#4a5bc6;opacity:.42"></div><div class="a" style="left:1191.88px;top:98.00px;width:0.84px;height:1.1px;background:#2f4cf0;opacity:.42"></div><div class="a" style="left:1193.56px;top:98.00px;width:6.72px;height:1.1px;background:#7b4aa0;opacity:.42"></div><div class="a" style="left:1200.28px;top:98.00px;width:0.84px;height:1.1px;background:#555;opacity:.42"></div><div class="a" style="left:1201.96px;top:98.00px;width:2.52px;height:1.1px;background:#7b4aa0;opacity:.42"></div><div class="a" style="left:1205.32px;top:98.00px;width:0.84px;height:1.1px;background:#2f4cf0;opacity:.42"></div><div class="a" style="left:1207.00px;top:98.00px;width:3.36px;height:1.1px;background:#4a5bc6;opacity:.42"></div><div class="a" style="left:1211.20px;top:98.00px;width:0.84px;height:1.1px;background:#8f7b55;opacity:.42"></div><div class="a" style="left:1212.04px;top:98.00px;width:2.52px;height:1.1px;background:#4f8a2f;opacity:.42"></div><div class="a" style="left:1214.56px;top:98.00px;width:0.84px;height:1.1px;background:#8f7b55;opacity:.42"></div><div class="a" style="left:1186.00px;top:99.70px;width:5.04px;height:1.1px;background:#4a5bc6;opacity:.42"></div><div class="a" style="left:1191.88px;top:99.70px;width:3.36px;height:1.1px;background:#4a5bc6;opacity:.42"></div><div class="a" style="left:1196.08px;top:99.70px;width:0.84px;height:1.1px;background:#2f4cf0;opacity:.42"></div><div class="a" style="left:1197.76px;top:99.70px;width:6.72px;height:1.1px;background:#7b4aa0;opacity:.42"></div><div class="a" style="left:1204.48px;top:99.70px;width:0.84px;height:1.1px;background:#555;opacity:.42"></div><div class="a" style="left:1206.16px;top:99.70px;width:10.08px;height:1.1px;background:#c4aedb;opacity:.42"></div><div class="a" style="left:1216.24px;top:99.70px;width:0.84px;height:1.1px;background:#555;opacity:.42"></div><div class="a" style="left:1217.92px;top:99.70px;width:7.56px;height:1.1px;background:#c4aedb;opacity:.42"></div><div class="a" style="left:1225.48px;top:99.70px;width:0.84px;height:1.1px;background:#555;opacity:.42"></div><div class="a" style="left:1227.16px;top:99.70px;width:7.56px;height:1.1px;background:#c4aedb;opacity:.42"></div><div class="a" style="left:1235.56px;top:99.70px;width:0.84px;height:1.1px;background:#2f4cf0;opacity:.42"></div><div class="a" style="left:1237.24px;top:99.70px;width:3.36px;height:1.1px;background:#4a5bc6;opacity:.42"></div><div class="a" style="left:1241.44px;top:99.70px;width:0.84px;height:1.1px;background:#8f7b55;opacity:.42"></div><div class="a" style="left:1242.28px;top:99.70px;width:6.72px;height:1.1px;background:#4f8a2f;opacity:.42"></div><div class="a" style="left:1249.00px;top:99.70px;width:0.84px;height:1.1px;background:#8f7b55;opacity:.42"></div><div class="a" style="left:1186.00px;top:101.40px;width:5.04px;height:1.1px;background:#4a5bc6;opacity:.42"></div><div class="a" style="left:1191.88px;top:101.40px;width:0.84px;height:1.1px;background:#2f4cf0;opacity:.42"></div><div class="a" style="left:1193.56px;top:101.40px;width:8.40px;height:1.1px;background:#7b4aa0;opacity:.42"></div><div class="a" style="left:1201.96px;top:101.40px;width:0.84px;height:1.1px;background:#555;opacity:.42"></div><div class="a" style="left:1203.64px;top:101.40px;width:8.40px;height:1.1px;background:#7b4aa0;opacity:.42"></div><div class="a" style="left:1212.88px;top:101.40px;width:0.84px;height:1.1px;background:#2f4cf0;opacity:.42"></div><div class="a" style="left:1214.56px;top:101.40px;width:3.36px;height:1.1px;background:#4a5bc6;opacity:.42"></div><div class="a" style="left:1218.76px;top:101.40px;width:0.84px;height:1.1px;background:#8f7b55;opacity:.42"></div><div class="a" style="left:1219.60px;top:101.40px;width:10.08px;height:1.1px;background:#4f8a2f;opacity:.42"></div><div class="a" style="left:1229.68px;top:101.40px;width:0.84px;height:1.1px;background:#8f7b55;opacity:.42"></div><div class="a" style="left:1186.00px;top:103.10px;width:5.04px;height:1.1px;background:#4a5bc6;opacity:.42"></div><div class="a" style="left:1191.88px;top:103.10px;width:0.84px;height:1.1px;background:#2f4cf0;opacity:.42"></div><div class="a" style="left:1193.56px;top:103.10px;width:11.76px;height:1.1px;background:#7b4aa0;opacity:.42"></div><div class="a" style="left:1205.32px;top:103.10px;width:0.84px;height:1.1px;background:#555;opacity:.42"></div><div class="a" style="left:1207.00px;top:103.10px;width:4.20px;height:1.1px;background:#7b4aa0;opacity:.42"></div><div class="a" style="left:1211.20px;top:103.10px;width:0.84px;height:1.1px;background:#555;opacity:.42"></div><div class="a" style="left:1212.88px;top:103.10px;width:10.08px;height:1.1px;background:#7b4aa0;opacity:.42"></div><div class="a" style="left:1223.80px;top:103.10px;width:0.84px;height:1.1px;background:#2f4cf0;opacity:.42"></div><div class="a" style="left:1225.48px;top:103.10px;width:3.36px;height:1.1px;background:#4a5bc6;opacity:.42"></div><div class="a" style="left:1229.68px;top:103.10px;width:0.84px;height:1.1px;background:#8f7b55;opacity:.42"></div><div class="a" style="left:1230.52px;top:103.10px;width:6.72px;height:1.1px;background:#4f8a2f;opacity:.42"></div><div class="a" style="left:1237.24px;top:103.10px;width:0.84px;height:1.1px;background:#8f7b55;opacity:.42"></div><div class="a" style="left:1186.00px;top:104.80px;width:5.04px;height:1.1px;background:#4a5bc6;opacity:.42"></div><div class="a" style="left:1191.88px;top:104.80px;width:0.84px;height:1.1px;background:#2f4cf0;opacity:.42"></div><div class="a" style="left:1193.56px;top:104.80px;width:10.92px;height:1.1px;background:#7b4aa0;opacity:.42"></div><div class="a" style="left:1205.32px;top:104.80px;width:0.84px;height:1.1px;background:#2f4cf0;opacity:.42"></div><div class="a" style="left:1207.00px;top:104.80px;width:3.36px;height:1.1px;background:#4a5bc6;opacity:.42"></div><div class="a" style="left:1211.20px;top:104.80px;width:0.84px;height:1.1px;background:#8f7b55;opacity:.42"></div><div class="a" style="left:1212.04px;top:104.80px;width:15.12px;height:1.1px;background:#4f8a2f;opacity:.42"></div><div class="a" style="left:1227.16px;top:104.80px;width:0.84px;height:1.1px;background:#8f7b55;opacity:.42"></div><div class="a" style="left:1186.00px;top:106.50px;width:5.04px;height:1.1px;background:#4a5bc6;opacity:.42"></div><div class="a" style="left:1191.88px;top:106.50px;width:0.84px;height:1.1px;background:#2f4cf0;opacity:.42"></div><div class="a" style="left:1193.56px;top:106.50px;width:8.40px;height:1.1px;background:#7b4aa0;opacity:.42"></div><div class="a" style="left:1202.80px;top:106.50px;width:0.84px;height:1.1px;background:#2f4cf0;opacity:.42"></div><div class="a" style="left:1204.48px;top:106.50px;width:3.36px;height:1.1px;background:#4a5bc6;opacity:.42"></div><div class="a" style="left:1208.68px;top:106.50px;width:0.84px;height:1.1px;background:#8f7b55;opacity:.42"></div><div class="a" style="left:1209.52px;top:106.50px;width:12.60px;height:1.1px;background:#4f8a2f;opacity:.42"></div><div class="a" style="left:1222.12px;top:106.50px;width:0.84px;height:1.1px;background:#8f7b55;opacity:.42"></div><div class="a" style="left:1186.00px;top:109.90px;width:1.68px;height:1.1px;background:#a9a9a9;opacity:.42"></div><div class="a" style="left:1188.52px;top:109.90px;width:3.36px;height:1.1px;background:#a9a9a9;opacity:.42"></div><div class="a" style="left:1186.00px;top:111.60px;width:5.04px;height:1.1px;background:#4a5bc6;opacity:.42"></div><div class="a" style="left:1191.88px;top:111.60px;width:4.20px;height:1.1px;background:#7b4aa0;opacity:.42"></div><div class="a" style="left:1196.92px;top:111.60px;width:6.72px;height:1.1px;background:#7b4aa0;opacity:.42"></div><div class="a" style="left:1204.48px;top:111.60px;width:0.84px;height:1.1px;background:#555;opacity:.42"></div><div class="a" style="left:1206.16px;top:111.60px;width:6.72px;height:1.1px;background:#8c1f2f;opacity:.42"></div><div class="a" style="left:1212.88px;top:111.60px;width:0.84px;height:1.1px;background:#7b4aa0;opacity:.42"></div><div class="a" style="left:1213.72px;top:111.60px;width:6.72px;height:1.1px;background:#7b4aa0;opacity:.42"></div><div class="a" style="left:1220.44px;top:111.60px;width:0.84px;height:1.1px;background:#7b4aa0;opacity:.42"></div><div class="a" style="left:1221.28px;top:111.60px;width:0.84px;height:1.1px;background:#2f4cf0;opacity:.42"></div><div class="a" style="left:1222.12px;top:111.60px;width:0.84px;height:1.1px;background:#3f8f3a;opacity:.42"></div><div class="a" style="left:1187.68px;top:113.30px;width:5.04px;height:1.1px;background:#7b4aa0;opacity:.42"></div><div class="a" style="left:1192.72px;top:113.30px;width:0.84px;height:1.1px;background:#555;opacity:.42"></div><div class="a" style="left:1194.40px;top:113.30px;width:0.84px;height:1.1px;background:#a8701f;opacity:.42"></div><div class="a" style="left:1189.36px;top:115.00px;width:4.20px;height:1.1px;background:#7b4aa0;opacity:.42"></div><div class="a" style="left:1193.56px;top:115.00px;width:0.84px;height:1.1px;background:#555;opacity:.42"></div><div class="a" style="left:1195.24px;top:115.00px;width:1.68px;height:1.1px;background:#8f7b55;opacity:.42"></div><div class="a" style="left:1196.92px;top:115.00px;width:0.84px;height:1.1px;background:#555;opacity:.42"></div><div class="a" style="left:1189.36px;top:116.70px;width:7.56px;height:1.1px;background:#7b4aa0;opacity:.42"></div><div class="a" style="left:1196.92px;top:116.70px;width:0.84px;height:1.1px;background:#555;opacity:.42"></div><div class="a" style="left:1198.60px;top:116.70px;width:1.68px;height:1.1px;background:#8f7b55;opacity:.42"></div><div class="a" style="left:1200.28px;top:116.70px;width:0.84px;height:1.1px;background:#555;opacity:.42"></div><div class="a" style="left:1189.36px;top:118.40px;width:7.56px;height:1.1px;background:#7b4aa0;opacity:.42"></div><div class="a" style="left:1196.92px;top:118.40px;width:0.84px;height:1.1px;background:#555;opacity:.42"></div><div class="a" style="left:1198.60px;top:118.40px;width:4.20px;height:1.1px;background:#9b6b2b;opacity:.42"></div><div class="a" style="left:1202.80px;top:118.40px;width:0.84px;height:1.1px;background:#555;opacity:.42"></div><div class="a" style="left:1189.36px;top:120.10px;width:6.72px;height:1.1px;background:#7b4aa0;opacity:.42"></div><div class="a" style="left:1196.08px;top:120.10px;width:0.84px;height:1.1px;background:#555;opacity:.42"></div><div class="a" style="left:1197.76px;top:120.10px;width:3.36px;height:1.1px;background:#9b6b2b;opacity:.42"></div><div class="a" style="left:1187.68px;top:121.80px;width:0.84px;height:1.1px;background:#a8701f;opacity:.42"></div><div class="a" style="left:1188.52px;top:121.80px;width:0.84px;height:1.1px;background:#555;opacity:.42"></div><div class="a" style="left:1187.68px;top:123.50px;width:2.52px;height:1.1px;background:#7b4aa0;opacity:.42"></div><div class="a" style="left:1190.20px;top:123.50px;width:0.84px;height:1.1px;background:#555;opacity:.42"></div><div class="a" style="left:1191.88px;top:123.50px;width:0.84px;height:1.1px;background:#a8701f;opacity:.42"></div><div class="a" style="left:1189.36px;top:125.20px;width:6.72px;height:1.1px;background:#7b4aa0;opacity:.42"></div><div class="a" style="left:1196.08px;top:125.20px;width:0.84px;height:1.1px;background:#555;opacity:.42"></div><div class="a" style="left:1197.76px;top:125.20px;width:0.84px;height:1.1px;background:#8f7b55;opacity:.42"></div><div class="a" style="left:1198.60px;top:125.20px;width:1.68px;height:1.1px;background:#4f8a2f;opacity:.42"></div><div class="a" style="left:1200.28px;top:125.20px;width:0.84px;height:1.1px;background:#8f7b55;opacity:.42"></div><div class="a" style="left:1201.12px;top:125.20px;width:0.84px;height:1.1px;background:#555;opacity:.42"></div><div class="a" style="left:1189.36px;top:126.90px;width:4.20px;height:1.1px;background:#7b4aa0;opacity:.42"></div><div class="a" style="left:1193.56px;top:126.90px;width:0.84px;height:1.1px;background:#555;opacity:.42"></div><div class="a" style="left:1195.24px;top:126.90px;width:1.68px;height:1.1px;background:#8f7b55;opacity:.42"></div><div class="a" style="left:1196.92px;top:126.90px;width:0.84px;height:1.1px;background:#555;opacity:.42"></div><div class="a" style="left:1189.36px;top:128.60px;width:6.72px;height:1.1px;background:#7b4aa0;opacity:.42"></div><div class="a" style="left:1196.08px;top:128.60px;width:0.84px;height:1.1px;background:#555;opacity:.42"></div><div class="a" style="left:1197.76px;top:128.60px;width:1.68px;height:1.1px;background:#8f7b55;opacity:.42"></div><div class="a" style="left:1199.44px;top:128.60px;width:0.84px;height:1.1px;background:#555;opacity:.42"></div><div class="a" style="left:1189.36px;top:130.30px;width:7.56px;height:1.1px;background:#7b4aa0;opacity:.42"></div><div class="a" style="left:1196.92px;top:130.30px;width:0.84px;height:1.1px;background:#555;opacity:.42"></div><div class="a" style="left:1198.60px;top:130.30px;width:1.68px;height:1.1px;background:#8f7b55;opacity:.42"></div><div class="a" style="left:1200.28px;top:130.30px;width:0.84px;height:1.1px;background:#555;opacity:.42"></div><div class="a" style="left:1189.36px;top:132.00px;width:9.24px;height:1.1px;background:#7b4aa0;opacity:.42"></div><div class="a" style="left:1198.60px;top:132.00px;width:0.84px;height:1.1px;background:#555;opacity:.42"></div><div class="a" style="left:1200.28px;top:132.00px;width:4.20px;height:1.1px;background:#9b6b2b;opacity:.42"></div><div class="a" style="left:1187.68px;top:133.70px;width:0.84px;height:1.1px;background:#a8701f;opacity:.42"></div><div class="a" style="left:1188.52px;top:133.70px;width:0.84px;height:1.1px;background:#555;opacity:.42"></div><div class="a" style="left:1187.68px;top:135.40px;width:2.52px;height:1.1px;background:#7b4aa0;opacity:.42"></div><div class="a" style="left:1190.20px;top:135.40px;width:0.84px;height:1.1px;background:#555;opacity:.42"></div><div class="a" style="left:1191.88px;top:135.40px;width:0.84px;height:1.1px;background:#a8701f;opacity:.42"></div><div class="a" style="left:1189.36px;top:137.10px;width:4.20px;height:1.1px;background:#7b4aa0;opacity:.42"></div><div class="a" style="left:1193.56px;top:137.10px;width:0.84px;height:1.1px;background:#555;opacity:.42"></div><div class="a" style="left:1195.24px;top:137.10px;width:8.40px;height:1.1px;background:#7b4aa0;opacity:.42"></div><div class="a" style="left:1203.64px;top:137.10px;width:0.84px;height:1.1px;background:#555;opacity:.42"></div><div class="a" style="left:1204.48px;top:137.10px;width:10.92px;height:1.1px;background:#7b4aa0;opacity:.42"></div><div class="a" style="left:1215.40px;top:137.10px;width:0.84px;height:1.1px;background:#555;opacity:.42"></div><div class="a" style="left:1189.36px;top:138.80px;width:5.04px;height:1.1px;background:#7b4aa0;opacity:.42"></div><div class="a" style="left:1194.40px;top:138.80px;width:0.84px;height:1.1px;background:#555;opacity:.42"></div><div class="a" style="left:1196.08px;top:138.80px;width:1.68px;height:1.1px;background:#8f7b55;opacity:.42"></div><div class="a" style="left:1187.68px;top:140.50px;width:0.84px;height:1.1px;background:#a8701f;opacity:.42"></div><div class="a" style="left:1188.52px;top:140.50px;width:0.84px;height:1.1px;background:#555;opacity:.42"></div><div class="a" style="left:1187.68px;top:142.20px;width:1.68px;height:1.1px;background:#7b4aa0;opacity:.42"></div><div class="a" style="left:1189.36px;top:142.20px;width:0.84px;height:1.1px;background:#555;opacity:.42"></div><div class="a" style="left:1191.04px;top:142.20px;width:0.84px;height:1.1px;background:#a8701f;opacity:.42"></div><div class="a" style="left:1189.36px;top:143.90px;width:3.36px;height:1.1px;background:#7b4aa0;opacity:.42"></div><div class="a" style="left:1192.72px;top:143.90px;width:0.84px;height:1.1px;background:#555;opacity:.42"></div><div class="a" style="left:1194.40px;top:143.90px;width:1.68px;height:1.1px;background:#8f7b55;opacity:.42"></div><div class="a" style="left:1196.08px;top:143.90px;width:0.84px;height:1.1px;background:#555;opacity:.42"></div><div class="a" style="left:1189.36px;top:145.60px;width:10.08px;height:1.1px;background:#7b4aa0;opacity:.42"></div><div class="a" style="left:1199.44px;top:145.60px;width:0.84px;height:1.1px;background:#555;opacity:.42"></div><div class="a" style="left:1201.12px;top:145.60px;width:1.68px;height:1.1px;background:#8f7b55;opacity:.42"></div><div class="a" style="left:1187.68px;top:147.30px;width:0.84px;height:1.1px;background:#a8701f;opacity:.42"></div><div class="a" style="left:1186.00px;top:149.00px;width:0.84px;height:1.1px;background:#3f8f3a;opacity:.42"></div><div class="a" style="left:1186.84px;top:149.00px;width:0.84px;height:1.1px;background:#2f4cf0;opacity:.42"></div><div class="a" style="left:1186.00px;top:152.40px;width:4.20px;height:1.1px;background:#7b4aa0;opacity:.42"></div><div class="a" style="left:1191.04px;top:152.40px;width:13.44px;height:1.1px;background:#7b4aa0;opacity:.42"></div><div class="a" style="left:1205.32px;top:152.40px;width:0.84px;height:1.1px;background:#555;opacity:.42"></div><div class="a" style="left:1207.00px;top:152.40px;width:0.84px;height:1.1px;background:#9b6b2b;opacity:.42"></div><div class="a" style="left:1208.68px;top:152.40px;width:1.68px;height:1.1px;background:#a9a9a9;opacity:.42"></div><div class="a" style="left:1211.20px;top:152.40px;width:5.04px;height:1.1px;background:#a9a9a9;opacity:.42"></div><div class="a" style="left:1192.72px;top:154.10px;width:7.56px;height:1.1px;background:#8c1f2f;opacity:.42"></div><div class="a" style="left:1201.12px;top:154.10px;width:4.20px;height:1.1px;background:#7b4aa0;opacity:.42"></div><div class="a" style="left:1206.16px;top:154.10px;width:7.56px;height:1.1px;background:#7b4aa0;opacity:.42"></div><div class="a" style="left:1214.56px;top:154.10px;width:2.52px;height:1.1px;background:#a8701f;opacity:.42"></div><div class="a" style="left:1187.68px;top:155.80px;width:1.68px;height:1.1px;background:#555;opacity:.42"></div><div class="a" style="left:1190.20px;top:155.80px;width:7.56px;height:1.1px;background:#7b4aa0;opacity:.42"></div><div class="a" style="left:1198.60px;top:155.80px;width:1.68px;height:1.1px;background:#8c1f2f;opacity:.42"></div><div class="a" style="left:1201.12px;top:155.80px;width:2.52px;height:1.1px;background:#7b4aa0;opacity:.42"></div><div class="a" style="left:1204.48px;top:155.80px;width:1.68px;height:1.1px;background:#4a5bc6;opacity:.42"></div><div class="a" style="left:1207.00px;top:155.80px;width:4.20px;height:1.1px;background:#7b4aa0;opacity:.42"></div><div class="a" style="left:1189.36px;top:157.50px;width:4.20px;height:1.1px;background:#8c1f2f;opacity:.42"></div><div class="a" style="left:1194.40px;top:157.50px;width:4.20px;height:1.1px;background:#4f8a2f;opacity:.42"></div><div class="a" style="left:1199.44px;top:157.50px;width:7.56px;height:1.1px;background:#7b4aa0;opacity:.42"></div><div class="a" style="left:1207.84px;top:157.50px;width:2.52px;height:1.1px;background:#a8701f;opacity:.42"></div><div class="a" style="left:1191.04px;top:159.20px;width:2.52px;height:1.1px;background:#4f8a2f;opacity:.42"></div><div class="a" style="left:1194.40px;top:159.20px;width:5.88px;height:1.1px;background:#4a5bc6;opacity:.42"></div><div class="a" style="left:1201.12px;top:159.20px;width:5.04px;height:1.1px;background:#7b4aa0;opacity:.42"></div><div class="a" style="left:1207.00px;top:159.20px;width:2.52px;height:1.1px;background:#7b4aa0;opacity:.42"></div><div class="a" style="left:1210.36px;top:159.20px;width:6.72px;height:1.1px;background:#7b4aa0;opacity:.42"></div><div class="a" style="left:1217.92px;top:159.20px;width:5.04px;height:1.1px;background:#555;opacity:.42"></div><div class="a" style="left:1189.36px;top:164.30px;width:1.68px;height:1.1px;background:#a8701f;opacity:.42"></div><div class="a" style="left:1191.88px;top:164.30px;width:6.72px;height:1.1px;background:#555;opacity:.42"></div><div class="a" style="left:1194.40px;top:166.00px;width:5.04px;height:1.1px;background:#9b6b2b;opacity:.42"></div><div class="a" style="left:1200.28px;top:166.00px;width:2.52px;height:1.1px;background:#4f8a2f;opacity:.42"></div><div class="a" style="left:1191.04px;top:167.70px;width:3.36px;height:1.1px;background:#4a5bc6;opacity:.42"></div><div class="a" style="left:1186.00px;top:169.40px;width:7.56px;height:1.1px;background:#a8701f;opacity:.42"></div><div class="a" style="left:1192.72px;top:171.10px;width:7.56px;height:1.1px;background:#8c1f2f;opacity:.42"></div><div class="a" style="left:1201.12px;top:171.10px;width:4.20px;height:1.1px;background:#7b4aa0;opacity:.42"></div><div class="a" style="left:1191.04px;top:172.80px;width:6.72px;height:1.1px;background:#555;opacity:.42"></div><div class="a" style="left:1186.00px;top:174.50px;width:5.04px;height:1.1px;background:#7b4aa0;opacity:.42"></div><div class="a" style="left:1191.88px;top:174.50px;width:4.20px;height:1.1px;background:#7b4aa0;opacity:.42"></div><div class="a" style="left:1194.40px;top:176.20px;width:1.68px;height:1.1px;background:#7b4aa0;opacity:.42"></div><div class="a" style="left:1189.36px;top:177.90px;width:5.88px;height:1.1px;background:#4f8a2f;opacity:.42"></div><div class="a" style="left:1187.68px;top:179.60px;width:4.20px;height:1.1px;background:#4a5bc6;opacity:.42"></div><div class="a" style="left:1194.40px;top:183.00px;width:3.36px;height:1.1px;background:#a8701f;opacity:.42"></div><div class="a" style="left:1198.60px;top:183.00px;width:3.36px;height:1.1px;background:#555;opacity:.42"></div><div class="a" style="left:1202.80px;top:183.00px;width:3.36px;height:1.1px;background:#7b4aa0;opacity:.42"></div><div class="a" style="left:1207.00px;top:183.00px;width:5.04px;height:1.1px;background:#4a5bc6;opacity:.42"></div><div class="a" style="left:1189.36px;top:184.70px;width:3.36px;height:1.1px;background:#8c1f2f;opacity:.42"></div><div class="a" style="left:1193.56px;top:184.70px;width:4.20px;height:1.1px;background:#555;opacity:.42"></div><div class="a" style="left:1194.40px;top:186.40px;width:6.72px;height:1.1px;background:#7b4aa0;opacity:.42"></div><div class="a" style="left:1189.36px;top:191.50px;width:5.04px;height:1.1px;background:#555;opacity:.42"></div><div class="a" style="left:1195.24px;top:191.50px;width:7.56px;height:1.1px;background:#4f8a2f;opacity:.42"></div><div class="a" style="left:1203.64px;top:191.50px;width:3.36px;height:1.1px;background:#7b4aa0;opacity:.42"></div><div class="a" style="left:1191.04px;top:193.20px;width:2.52px;height:1.1px;background:#4f8a2f;opacity:.42"></div><div class="a" style="left:1194.40px;top:193.20px;width:4.20px;height:1.1px;background:#4a5bc6;opacity:.42"></div><div class="a" style="left:1199.44px;top:193.20px;width:1.68px;height:1.1px;background:#7b4aa0;opacity:.42"></div><div class="a" style="left:1201.96px;top:193.20px;width:5.04px;height:1.1px;background:#555;opacity:.42"></div><div class="a" style="left:1207.84px;top:193.20px;width:7.56px;height:1.1px;background:#4a5bc6;opacity:.42"></div><div class="a" style="left:1216.24px;top:193.20px;width:1.68px;height:1.1px;background:#7b4aa0;opacity:.42"></div><div class="a" style="left:1189.36px;top:194.90px;width:3.36px;height:1.1px;background:#7b4aa0;opacity:.42"></div><div class="a" style="left:1193.56px;top:194.90px;width:5.88px;height:1.1px;background:#7b4aa0;opacity:.42"></div><div class="a" style="left:1200.28px;top:194.90px;width:7.56px;height:1.1px;background:#9b6b2b;opacity:.42"></div><div class="a" style="left:1208.68px;top:194.90px;width:3.36px;height:1.1px;background:#7b4aa0;opacity:.42"></div><div class="a" style="left:1212.88px;top:194.90px;width:1.68px;height:1.1px;background:#a8701f;opacity:.42"></div><div class="a" style="left:1215.40px;top:194.90px;width:5.88px;height:1.1px;background:#4f8a2f;opacity:.42"></div><div class="a" style="left:1186.00px;top:196.60px;width:7.56px;height:1.1px;background:#7b4aa0;opacity:.42"></div><div class="a" style="left:1189.36px;top:198.30px;width:2.52px;height:1.1px;background:#7b4aa0;opacity:.42"></div><div class="a" style="left:1189.36px;top:200.00px;width:3.36px;height:1.1px;background:#9b6b2b;opacity:.42"></div><div class="a" style="left:1191.04px;top:201.70px;width:6.72px;height:1.1px;background:#7b4aa0;opacity:.42"></div><div class="a" style="left:1194.40px;top:203.40px;width:6.72px;height:1.1px;background:#555;opacity:.42"></div><div class="a" style="left:1194.40px;top:205.10px;width:2.52px;height:1.1px;background:#7b4aa0;opacity:.42"></div><div class="a" style="left:1189.36px;top:206.80px;width:5.88px;height:1.1px;background:#555;opacity:.42"></div><div class="a" style="left:1196.08px;top:206.80px;width:7.56px;height:1.1px;background:#a8701f;opacity:.42"></div><div class="a" style="left:1204.48px;top:206.80px;width:7.56px;height:1.1px;background:#8c1f2f;opacity:.42"></div><div class="a" style="left:1186.00px;top:210.20px;width:2.52px;height:1.1px;background:#a8701f;opacity:.42"></div><div class="a" style="left:1189.36px;top:210.20px;width:1.68px;height:1.1px;background:#4a5bc6;opacity:.42"></div><div class="a" style="left:1187.68px;top:211.90px;width:7.56px;height:1.1px;background:#4f8a2f;opacity:.42"></div><div class="a" style="left:1196.08px;top:211.90px;width:1.68px;height:1.1px;background:#9b6b2b;opacity:.42"></div><div class="a" style="left:1198.60px;top:211.90px;width:5.04px;height:1.1px;background:#7b4aa0;opacity:.42"></div><div class="a" style="left:1204.48px;top:211.90px;width:4.20px;height:1.1px;background:#8c1f2f;opacity:.42"></div><div class="a" style="left:1189.36px;top:213.60px;width:7.56px;height:1.1px;background:#4a5bc6;opacity:.42"></div><div class="a" style="left:1197.76px;top:213.60px;width:5.88px;height:1.1px;background:#555;opacity:.42"></div><div class="a" style="left:1204.48px;top:213.60px;width:5.04px;height:1.1px;background:#4a5bc6;opacity:.42"></div><div class="a" style="left:1210.36px;top:213.60px;width:6.72px;height:1.1px;background:#4a5bc6;opacity:.42"></div><div class="a" style="left:1191.04px;top:215.30px;width:5.88px;height:1.1px;background:#4a5bc6;opacity:.42"></div><div class="a" style="left:1197.76px;top:215.30px;width:3.36px;height:1.1px;background:#7b4aa0;opacity:.42"></div><div class="a" style="left:1186.00px;top:217.00px;width:5.04px;height:1.1px;background:#7b4aa0;opacity:.42"></div><div class="a" style="left:1189.36px;top:220.40px;width:6.72px;height:1.1px;background:#8c1f2f;opacity:.42"></div><div class="a" style="left:1196.92px;top:220.40px;width:7.56px;height:1.1px;background:#9b6b2b;opacity:.42"></div><div class="a" style="left:1205.32px;top:220.40px;width:7.56px;height:1.1px;background:#9b6b2b;opacity:.42"></div><div class="a" style="left:1186.00px;top:225.50px;width:5.88px;height:1.1px;background:#4f8a2f;opacity:.42"></div><div class="a" style="left:1192.72px;top:225.50px;width:1.68px;height:1.1px;background:#7b4aa0;opacity:.42"></div><div class="a" style="left:1189.36px;top:227.20px;width:5.04px;height:1.1px;background:#4a5bc6;opacity:.42"></div><div class="a" style="left:1186.00px;top:228.90px;width:7.56px;height:1.1px;background:#7b4aa0;opacity:.42"></div><div class="a" style="left:1189.36px;top:230.60px;width:4.20px;height:1.1px;background:#4a5bc6;opacity:.42"></div><div class="a" style="left:1189.36px;top:232.30px;width:1.68px;height:1.1px;background:#a8701f;opacity:.42"></div><div class="a" style="left:1186.00px;top:234.00px;width:4.20px;height:1.1px;background:#4f8a2f;opacity:.42"></div><div class="a" style="left:1192.72px;top:235.70px;width:3.36px;height:1.1px;background:#555;opacity:.42"></div><div class="a" style="left:1196.92px;top:235.70px;width:4.20px;height:1.1px;background:#7b4aa0;opacity:.42"></div><div class="a" style="left:1201.96px;top:235.70px;width:6.72px;height:1.1px;background:#555;opacity:.42"></div><div class="a" style="left:1209.52px;top:235.70px;width:3.36px;height:1.1px;background:#a8701f;opacity:.42"></div><div class="a" style="left:1213.72px;top:235.70px;width:7.56px;height:1.1px;background:#4a5bc6;opacity:.42"></div><div class="a" style="left:1222.12px;top:235.70px;width:1.68px;height:1.1px;background:#555;opacity:.42"></div><div class="a" style="left:1192.72px;top:237.40px;width:7.56px;height:1.1px;background:#9b6b2b;opacity:.42"></div><div class="a" style="left:1201.12px;top:237.40px;width:4.20px;height:1.1px;background:#7b4aa0;opacity:.42"></div><div class="a" style="left:1206.16px;top:237.40px;width:2.52px;height:1.1px;background:#4a5bc6;opacity:.42"></div><div class="a" style="left:1191.04px;top:239.10px;width:5.04px;height:1.1px;background:#8c1f2f;opacity:.42"></div><div class="a" style="left:1189.36px;top:240.80px;width:1.68px;height:1.1px;background:#9b6b2b;opacity:.42"></div><div class="a" style="left:1191.88px;top:240.80px;width:2.52px;height:1.1px;background:#7b4aa0;opacity:.42"></div><div class="a" style="left:1192.72px;top:242.50px;width:5.04px;height:1.1px;background:#a8701f;opacity:.42"></div><div class="a" style="left:1198.60px;top:242.50px;width:1.68px;height:1.1px;background:#4a5bc6;opacity:.42"></div><div class="a" style="left:1201.12px;top:242.50px;width:2.52px;height:1.1px;background:#555;opacity:.42"></div><div class="a" style="left:1187.68px;top:244.20px;width:5.88px;height:1.1px;background:#7b4aa0;opacity:.42"></div><div class="a" style="left:1194.40px;top:244.20px;width:7.56px;height:1.1px;background:#7b4aa0;opacity:.42"></div><div class="a" style="left:1202.80px;top:244.20px;width:7.56px;height:1.1px;background:#a8701f;opacity:.42"></div><div class="a" style="left:1211.20px;top:244.20px;width:2.52px;height:1.1px;background:#4a5bc6;opacity:.42"></div><div class="a" style="left:1214.56px;top:244.20px;width:7.56px;height:1.1px;background:#8c1f2f;opacity:.42"></div><div class="a" style="left:1222.96px;top:244.20px;width:5.04px;height:1.1px;background:#8c1f2f;opacity:.42"></div><div class="a" style="left:1192.72px;top:245.90px;width:5.04px;height:1.1px;background:#4f8a2f;opacity:.42"></div><div class="a" style="left:1198.60px;top:245.90px;width:6.72px;height:1.1px;background:#4a5bc6;opacity:.42"></div><div class="a" style="left:1206.16px;top:245.90px;width:5.04px;height:1.1px;background:#7b4aa0;opacity:.42"></div><div class="a" style="left:1212.04px;top:245.90px;width:5.04px;height:1.1px;background:#a8701f;opacity:.42"></div><div class="a" style="left:1217.92px;top:245.90px;width:4.20px;height:1.1px;background:#555;opacity:.42"></div><div class="a" style="left:1222.96px;top:245.90px;width:2.52px;height:1.1px;background:#8c1f2f;opacity:.42"></div><div class="a" style="left:1192.72px;top:249.30px;width:6.72px;height:1.1px;background:#8c1f2f;opacity:.42"></div><div class="a" style="left:1194.40px;top:251.00px;width:7.56px;height:1.1px;background:#7b4aa0;opacity:.42"></div><div class="a" style="left:1187.68px;top:252.70px;width:7.56px;height:1.1px;background:#555;opacity:.42"></div><div class="a" style="left:1196.08px;top:252.70px;width:6.72px;height:1.1px;background:#4f8a2f;opacity:.42"></div><div class="a" style="left:1203.64px;top:252.70px;width:4.20px;height:1.1px;background:#a8701f;opacity:.42"></div><div class="a" style="left:1208.68px;top:252.70px;width:7.56px;height:1.1px;background:#7b4aa0;opacity:.42"></div><div class="a" style="left:1217.08px;top:252.70px;width:5.88px;height:1.1px;background:#555;opacity:.42"></div><div class="a" style="left:1223.80px;top:252.70px;width:7.56px;height:1.1px;background:#8c1f2f;opacity:.42"></div><div class="a" style="left:1189.36px;top:254.40px;width:1.68px;height:1.1px;background:#4f8a2f;opacity:.42"></div><div class="a" style="left:1191.88px;top:254.40px;width:3.36px;height:1.1px;background:#7b4aa0;opacity:.42"></div><div class="a" style="left:1196.08px;top:254.40px;width:1.68px;height:1.1px;background:#4a5bc6;opacity:.42"></div><div class="a" style="left:1186.00px;top:256.10px;width:5.88px;height:1.1px;background:#9b6b2b;opacity:.42"></div><div class="a" style="left:1192.72px;top:256.10px;width:4.20px;height:1.1px;background:#a8701f;opacity:.42"></div><div class="a" style="left:1187.68px;top:259.50px;width:5.04px;height:1.1px;background:#4a5bc6;opacity:.42"></div><div class="a" style="left:1193.56px;top:259.50px;width:6.72px;height:1.1px;background:#7b4aa0;opacity:.42"></div><div class="a" style="left:1201.12px;top:259.50px;width:6.72px;height:1.1px;background:#555;opacity:.42"></div><div class="a" style="left:1208.68px;top:259.50px;width:3.36px;height:1.1px;background:#8c1f2f;opacity:.42"></div><div class="a" style="left:1212.88px;top:259.50px;width:4.20px;height:1.1px;background:#8c1f2f;opacity:.42"></div><div class="a" style="left:1217.92px;top:259.50px;width:4.20px;height:1.1px;background:#8c1f2f;opacity:.42"></div><div class="a" style="left:1192.72px;top:261.20px;width:4.20px;height:1.1px;background:#9b6b2b;opacity:.42"></div><div class="a" style="left:1189.36px;top:262.90px;width:4.20px;height:1.1px;background:#4a5bc6;opacity:.42"></div><div class="a" style="left:1194.40px;top:262.90px;width:4.20px;height:1.1px;background:#7b4aa0;opacity:.42"></div><div class="a" style="left:1199.44px;top:262.90px;width:3.36px;height:1.1px;background:#4a5bc6;opacity:.42"></div><div class="a" style="left:1187.68px;top:264.60px;width:6.72px;height:1.1px;background:#7b4aa0;opacity:.42"></div><div class="a" style="left:1195.24px;top:264.60px;width:6.72px;height:1.1px;background:#555;opacity:.42"></div><div class="a" style="left:1187.68px;top:266.30px;width:6.72px;height:1.1px;background:#7b4aa0;opacity:.42"></div><div class="a" style="left:1195.24px;top:266.30px;width:2.52px;height:1.1px;background:#4a5bc6;opacity:.42"></div><div class="a" style="left:1189.36px;top:268.00px;width:2.52px;height:1.1px;background:#8c1f2f;opacity:.42"></div><div class="a" style="left:1192.72px;top:268.00px;width:5.88px;height:1.1px;background:#8c1f2f;opacity:.42"></div><div class="a" style="left:1199.44px;top:268.00px;width:4.20px;height:1.1px;background:#7b4aa0;opacity:.42"></div><div class="a" style="left:1186.00px;top:269.70px;width:7.56px;height:1.1px;background:#7b4aa0;opacity:.42"></div><div class="a" style="left:1187.68px;top:271.40px;width:3.36px;height:1.1px;background:#7b4aa0;opacity:.42"></div><div class="a" style="left:1191.88px;top:271.40px;width:5.04px;height:1.1px;background:#7b4aa0;opacity:.42"></div><div class="a" style="left:1187.68px;top:273.10px;width:2.52px;height:1.1px;background:#7b4aa0;opacity:.42"></div><div class="a" style="left:1191.04px;top:273.10px;width:5.88px;height:1.1px;background:#555;opacity:.42"></div><div class="a" style="left:1197.76px;top:273.10px;width:7.56px;height:1.1px;background:#555;opacity:.42"></div><div class="a" style="left:1206.16px;top:273.10px;width:5.88px;height:1.1px;background:#555;opacity:.42"></div><div class="a" style="left:1189.36px;top:274.80px;width:1.68px;height:1.1px;background:#4a5bc6;opacity:.42"></div><div class="a" style="left:1191.04px;top:276.50px;width:5.88px;height:1.1px;background:#555;opacity:.42"></div><div class="a" style="left:1197.76px;top:276.50px;width:4.20px;height:1.1px;background:#7b4aa0;opacity:.42"></div><div class="a" style="left:1202.80px;top:276.50px;width:2.52px;height:1.1px;background:#8c1f2f;opacity:.42"></div><div class="a" style="left:1189.36px;top:278.20px;width:6.72px;height:1.1px;background:#4a5bc6;opacity:.42"></div><div class="a" style="left:1189.36px;top:279.90px;width:5.04px;height:1.1px;background:#7b4aa0;opacity:.42"></div><div class="a" style="left:1195.24px;top:279.90px;width:3.36px;height:1.1px;background:#555;opacity:.42"></div><div class="a" style="left:1189.36px;top:281.60px;width:5.88px;height:1.1px;background:#555;opacity:.42"></div><div class="a" style="left:1196.08px;top:281.60px;width:3.36px;height:1.1px;background:#555;opacity:.42"></div><div class="a" style="left:1200.28px;top:281.60px;width:4.20px;height:1.1px;background:#7b4aa0;opacity:.42"></div><div class="a" style="left:1205.32px;top:281.60px;width:2.52px;height:1.1px;background:#9b6b2b;opacity:.42"></div><div class="a" style="left:1208.68px;top:281.60px;width:5.04px;height:1.1px;background:#a8701f;opacity:.42"></div><div class="a" style="left:1214.56px;top:281.60px;width:2.52px;height:1.1px;background:#7b4aa0;opacity:.42"></div><div class="a" style="left:1194.40px;top:283.30px;width:4.20px;height:1.1px;background:#4f8a2f;opacity:.42"></div><div class="a" style="left:1189.36px;top:285.00px;width:4.20px;height:1.1px;background:#555;opacity:.42"></div><div class="a" style="left:1194.40px;top:285.00px;width:3.36px;height:1.1px;background:#8c1f2f;opacity:.42"></div><div class="a" style="left:1198.60px;top:285.00px;width:2.52px;height:1.1px;background:#555;opacity:.42"></div><div class="a" style="left:1191.04px;top:286.70px;width:2.52px;height:1.1px;background:#555;opacity:.42"></div><div class="a" style="left:1194.40px;top:286.70px;width:1.68px;height:1.1px;background:#7b4aa0;opacity:.42"></div><div class="a" style="left:1189.36px;top:288.40px;width:7.56px;height:1.1px;background:#555;opacity:.42"></div><div class="a" style="left:1197.76px;top:288.40px;width:1.68px;height:1.1px;background:#4a5bc6;opacity:.42"></div><div class="a" style="left:1186.00px;top:290.10px;width:5.04px;height:1.1px;background:#4f8a2f;opacity:.42"></div><div class="a" style="left:1189.36px;top:291.80px;width:6.72px;height:1.1px;background:#8c1f2f;opacity:.42"></div><div class="a" style="left:1196.92px;top:291.80px;width:2.52px;height:1.1px;background:#a8701f;opacity:.42"></div><div class="a" style="left:1200.28px;top:291.80px;width:2.52px;height:1.1px;background:#8c1f2f;opacity:.42"></div><div class="a" style="left:1203.64px;top:291.80px;width:1.68px;height:1.1px;background:#555;opacity:.42"></div><div class="a" style="left:1206.16px;top:291.80px;width:3.36px;height:1.1px;background:#555;opacity:.42"></div><div class="a" style="left:1210.36px;top:291.80px;width:7.56px;height:1.1px;background:#7b4aa0;opacity:.42"></div><div class="a" style="left:1192.72px;top:293.50px;width:6.72px;height:1.1px;background:#a8701f;opacity:.42"></div><div class="a" style="left:1192.72px;top:295.20px;width:5.04px;height:1.1px;background:#9b6b2b;opacity:.42"></div><div class="a" style="left:1198.60px;top:295.20px;width:5.04px;height:1.1px;background:#a8701f;opacity:.42"></div><div class="a" style="left:1204.48px;top:295.20px;width:5.04px;height:1.1px;background:#8c1f2f;opacity:.42"></div><div class="a" style="left:1189.36px;top:296.90px;width:1.68px;height:1.1px;background:#4a5bc6;opacity:.42"></div><div class="a" style="left:1187.68px;top:298.60px;width:6.72px;height:1.1px;background:#7b4aa0;opacity:.42"></div><div class="a" style="left:1195.24px;top:298.60px;width:5.88px;height:1.1px;background:#555;opacity:.42"></div><div class="a" style="left:1201.96px;top:298.60px;width:1.68px;height:1.1px;background:#9b6b2b;opacity:.42"></div><div class="a" style="left:1191.04px;top:302.00px;width:5.04px;height:1.1px;background:#4a5bc6;opacity:.42"></div><div class="a" style="left:1196.92px;top:302.00px;width:1.68px;height:1.1px;background:#8c1f2f;opacity:.42"></div><div class="a" style="left:1199.44px;top:302.00px;width:2.52px;height:1.1px;background:#a8701f;opacity:.42"></div><div class="a" style="left:1202.80px;top:302.00px;width:3.36px;height:1.1px;background:#4a5bc6;opacity:.42"></div><div class="a" style="left:1187.68px;top:303.70px;width:6.72px;height:1.1px;background:#a8701f;opacity:.42"></div><div class="a" style="left:1189.36px;top:307.10px;width:3.36px;height:1.1px;background:#7b4aa0;opacity:.42"></div><div class="a" style="left:1193.56px;top:307.10px;width:5.88px;height:1.1px;background:#a8701f;opacity:.42"></div><div class="a" style="left:1200.28px;top:307.10px;width:3.36px;height:1.1px;background:#555;opacity:.42"></div><div class="a" style="left:1204.48px;top:307.10px;width:7.56px;height:1.1px;background:#4f8a2f;opacity:.42"></div><div class="a" style="left:1212.88px;top:307.10px;width:6.72px;height:1.1px;background:#9b6b2b;opacity:.42"></div><div class="a" style="left:1220.44px;top:307.10px;width:3.36px;height:1.1px;background:#4f8a2f;opacity:.42"></div><div class="a" style="left:1189.36px;top:308.80px;width:2.52px;height:1.1px;background:#8c1f2f;opacity:.42"></div><div class="a" style="left:1192.72px;top:308.80px;width:5.04px;height:1.1px;background:#8c1f2f;opacity:.42"></div><div class="a" style="left:1198.60px;top:308.80px;width:5.88px;height:1.1px;background:#4f8a2f;opacity:.42"></div><div class="a" style="left:1205.32px;top:308.80px;width:5.04px;height:1.1px;background:#4a5bc6;opacity:.42"></div><div class="a" style="left:1189.36px;top:310.50px;width:4.20px;height:1.1px;background:#8c1f2f;opacity:.42"></div><div class="a" style="left:1194.40px;top:310.50px;width:4.20px;height:1.1px;background:#7b4aa0;opacity:.42"></div><div class="a" style="left:1186.00px;top:312.20px;width:5.04px;height:1.1px;background:#555;opacity:.42"></div><div class="a" style="left:1191.88px;top:312.20px;width:1.68px;height:1.1px;background:#7b4aa0;opacity:.42"></div><div class="a" style="left:1187.68px;top:315.60px;width:3.36px;height:1.1px;background:#8c1f2f;opacity:.42"></div><div class="a" style="left:1189.36px;top:317.30px;width:7.56px;height:1.1px;background:#9b6b2b;opacity:.42"></div><div class="a" style="left:1197.76px;top:317.30px;width:4.20px;height:1.1px;background:#9b6b2b;opacity:.42"></div><div class="a" style="left:1202.80px;top:317.30px;width:5.88px;height:1.1px;background:#a8701f;opacity:.42"></div><div class="a" style="left:1209.52px;top:317.30px;width:3.36px;height:1.1px;background:#7b4aa0;opacity:.42"></div><div class="a" style="left:1191.04px;top:319.00px;width:7.56px;height:1.1px;background:#555;opacity:.42"></div><div class="a" style="left:1199.44px;top:319.00px;width:5.04px;height:1.1px;background:#555;opacity:.42"></div><div class="a" style="left:1189.36px;top:320.70px;width:5.88px;height:1.1px;background:#4f8a2f;opacity:.42"></div><div class="a" style="left:1187.68px;top:322.40px;width:5.88px;height:1.1px;background:#7b4aa0;opacity:.42"></div><div class="a" style="left:1194.40px;top:322.40px;width:7.56px;height:1.1px;background:#9b6b2b;opacity:.42"></div><div class="a" style="left:1202.80px;top:322.40px;width:2.52px;height:1.1px;background:#8c1f2f;opacity:.42"></div><div class="a" style="left:1191.04px;top:325.80px;width:5.04px;height:1.1px;background:#7b4aa0;opacity:.42"></div><div class="a" style="left:1196.92px;top:325.80px;width:2.52px;height:1.1px;background:#4f8a2f;opacity:.42"></div><div class="a" style="left:1200.28px;top:325.80px;width:4.20px;height:1.1px;background:#7b4aa0;opacity:.42"></div><div class="a" style="left:1205.32px;top:325.80px;width:5.04px;height:1.1px;background:#a8701f;opacity:.42"></div><div class="a" style="left:1189.36px;top:327.50px;width:3.36px;height:1.1px;background:#4a5bc6;opacity:.42"></div><div class="a" style="left:1193.56px;top:327.50px;width:5.88px;height:1.1px;background:#9b6b2b;opacity:.42"></div><div class="a" style="left:1187.68px;top:329.20px;width:7.56px;height:1.1px;background:#4f8a2f;opacity:.42"></div><div class="a" style="left:1196.08px;top:329.20px;width:7.56px;height:1.1px;background:#8c1f2f;opacity:.42"></div><div class="a" style="left:1204.48px;top:329.20px;width:5.04px;height:1.1px;background:#a8701f;opacity:.42"></div><div class="a" style="left:1191.04px;top:330.90px;width:4.20px;height:1.1px;background:#7b4aa0;opacity:.42"></div><div class="a" style="left:1196.08px;top:330.90px;width:5.88px;height:1.1px;background:#9b6b2b;opacity:.42"></div><div class="a" style="left:1202.80px;top:330.90px;width:1.68px;height:1.1px;background:#9b6b2b;opacity:.42"></div><div class="a" style="left:1205.32px;top:330.90px;width:6.72px;height:1.1px;background:#555;opacity:.42"></div><div class="a" style="left:1212.88px;top:330.90px;width:4.20px;height:1.1px;background:#9b6b2b;opacity:.42"></div><div class="a" style="left:1217.92px;top:330.90px;width:6.72px;height:1.1px;background:#8c1f2f;opacity:.42"></div><div class="a" style="left:1194.40px;top:332.60px;width:3.36px;height:1.1px;background:#7b4aa0;opacity:.42"></div><div class="a" style="left:1189.36px;top:334.30px;width:4.20px;height:1.1px;background:#8c1f2f;opacity:.42"></div><div class="a" style="left:1189.36px;top:337.70px;width:6.72px;height:1.1px;background:#7b4aa0;opacity:.42"></div><div class="a" style="left:1189.36px;top:339.40px;width:2.52px;height:1.1px;background:#9b6b2b;opacity:.42"></div><div class="a" style="left:1192.72px;top:339.40px;width:2.52px;height:1.1px;background:#4f8a2f;opacity:.42"></div><div class="a" style="left:1196.08px;top:339.40px;width:2.52px;height:1.1px;background:#9b6b2b;opacity:.42"></div><div class="a" style="left:1199.44px;top:339.40px;width:2.52px;height:1.1px;background:#7b4aa0;opacity:.42"></div><div class="a" style="left:1202.80px;top:339.40px;width:3.36px;height:1.1px;background:#7b4aa0;opacity:.42"></div><div class="a" style="left:1207.00px;top:339.40px;width:6.72px;height:1.1px;background:#4a5bc6;opacity:.42"></div><div class="a" style="left:1191.04px;top:341.10px;width:5.88px;height:1.1px;background:#a8701f;opacity:.42"></div><div class="a" style="left:1197.76px;top:341.10px;width:6.72px;height:1.1px;background:#9b6b2b;opacity:.42"></div><div class="a" style="left:1205.32px;top:341.10px;width:5.88px;height:1.1px;background:#9b6b2b;opacity:.42"></div><div class="a" style="left:1212.04px;top:341.10px;width:3.36px;height:1.1px;background:#a8701f;opacity:.42"></div><div class="a" style="left:1216.24px;top:341.10px;width:7.56px;height:1.1px;background:#8c1f2f;opacity:.42"></div><div class="a" style="left:1224.64px;top:341.10px;width:2.52px;height:1.1px;background:#7b4aa0;opacity:.42"></div><div class="a" style="left:1189.36px;top:342.80px;width:6.72px;height:1.1px;background:#7b4aa0;opacity:.42"></div><div class="a" style="left:1192.72px;top:344.50px;width:5.88px;height:1.1px;background:#7b4aa0;opacity:.42"></div><div class="a" style="left:1191.04px;top:346.20px;width:3.36px;height:1.1px;background:#4a5bc6;opacity:.42"></div><div class="a" style="left:1195.24px;top:346.20px;width:3.36px;height:1.1px;background:#555;opacity:.42"></div><div class="a" style="left:1199.44px;top:346.20px;width:3.36px;height:1.1px;background:#9b6b2b;opacity:.42"></div><div class="a" style="left:1191.04px;top:347.90px;width:5.04px;height:1.1px;background:#4f8a2f;opacity:.42"></div><div class="a" style="left:1196.92px;top:347.90px;width:1.68px;height:1.1px;background:#a8701f;opacity:.42"></div><div class="a" style="left:1199.44px;top:347.90px;width:5.04px;height:1.1px;background:#7b4aa0;opacity:.42"></div><div class="a" style="left:1205.32px;top:347.90px;width:5.04px;height:1.1px;background:#7b4aa0;opacity:.42"></div><div class="a" style="left:1211.20px;top:347.90px;width:3.36px;height:1.1px;background:#7b4aa0;opacity:.42"></div><div class="a" style="left:1215.40px;top:347.90px;width:7.56px;height:1.1px;background:#7b4aa0;opacity:.42"></div><div class="a" style="left:1186.00px;top:349.60px;width:2.52px;height:1.1px;background:#4a5bc6;opacity:.42"></div><div class="a" style="left:1189.36px;top:349.60px;width:3.36px;height:1.1px;background:#9b6b2b;opacity:.42"></div><div class="a" style="left:1193.56px;top:349.60px;width:4.20px;height:1.1px;background:#4a5bc6;opacity:.42"></div><div class="a" style="left:1191.04px;top:351.30px;width:4.20px;height:1.1px;background:#a8701f;opacity:.42"></div><div class="a" style="left:1196.08px;top:351.30px;width:3.36px;height:1.1px;background:#4f8a2f;opacity:.42"></div><div class="a" style="left:1200.28px;top:351.30px;width:6.72px;height:1.1px;background:#7b4aa0;opacity:.42"></div><div class="a" style="left:1207.84px;top:351.30px;width:5.04px;height:1.1px;background:#8c1f2f;opacity:.42"></div><div class="a" style="left:1213.72px;top:351.30px;width:7.56px;height:1.1px;background:#4f8a2f;opacity:.42"></div><div class="a" style="left:1222.12px;top:351.30px;width:7.56px;height:1.1px;background:#555;opacity:.42"></div><div class="a" style="left:1189.36px;top:353.00px;width:2.52px;height:1.1px;background:#a8701f;opacity:.42"></div><div class="a" style="left:1192.72px;top:353.00px;width:4.20px;height:1.1px;background:#555;opacity:.42"></div><div class="a" style="left:1197.76px;top:353.00px;width:1.68px;height:1.1px;background:#4a5bc6;opacity:.42"></div><div class="a" style="left:1200.28px;top:353.00px;width:3.36px;height:1.1px;background:#555;opacity:.42"></div><div class="a" style="left:1204.48px;top:353.00px;width:5.04px;height:1.1px;background:#7b4aa0;opacity:.42"></div><div class="a" style="left:1210.36px;top:353.00px;width:4.20px;height:1.1px;background:#7b4aa0;opacity:.42"></div><div class="a" style="left:1189.36px;top:354.70px;width:4.20px;height:1.1px;background:#555;opacity:.42"></div><div class="a" style="left:1194.40px;top:354.70px;width:3.36px;height:1.1px;background:#555;opacity:.42"></div><div class="a" style="left:1198.60px;top:354.70px;width:3.36px;height:1.1px;background:#9b6b2b;opacity:.42"></div><div class="a" style="left:1202.80px;top:354.70px;width:3.36px;height:1.1px;background:#4f8a2f;opacity:.42"></div><div class="a" style="left:1192.72px;top:356.40px;width:5.04px;height:1.1px;background:#8c1f2f;opacity:.42"></div><div class="a" style="left:1187.68px;top:358.10px;width:1.68px;height:1.1px;background:#4a5bc6;opacity:.42"></div><div class="a" style="left:1187.68px;top:359.80px;width:2.52px;height:1.1px;background:#9b6b2b;opacity:.42"></div><div class="a" style="left:1192.72px;top:361.50px;width:7.56px;height:1.1px;background:#a8701f;opacity:.42"></div><div class="a" style="left:1192.72px;top:364.90px;width:5.04px;height:1.1px;background:#7b4aa0;opacity:.42"></div><div class="a" style="left:1198.60px;top:364.90px;width:4.20px;height:1.1px;background:#555;opacity:.42"></div><div class="a" style="left:1203.64px;top:364.90px;width:4.20px;height:1.1px;background:#7b4aa0;opacity:.42"></div><div class="a" style="left:1208.68px;top:364.90px;width:7.56px;height:1.1px;background:#4a5bc6;opacity:.42"></div><div class="a" style="left:1217.08px;top:364.90px;width:1.68px;height:1.1px;background:#8c1f2f;opacity:.42"></div><div class="a" style="left:1219.60px;top:364.90px;width:6.72px;height:1.1px;background:#8c1f2f;opacity:.42"></div><div class="a" style="left:1189.36px;top:366.60px;width:5.04px;height:1.1px;background:#555;opacity:.42"></div><div class="a" style="left:1195.24px;top:366.60px;width:2.52px;height:1.1px;background:#8c1f2f;opacity:.42"></div><div class="a" style="left:1198.60px;top:366.60px;width:5.04px;height:1.1px;background:#a8701f;opacity:.42"></div><div class="a" style="left:1187.68px;top:368.30px;width:2.52px;height:1.1px;background:#7b4aa0;opacity:.42"></div><div class="a" style="left:1191.04px;top:368.30px;width:2.52px;height:1.1px;background:#555;opacity:.42"></div><div class="a" style="left:1194.40px;top:368.30px;width:7.56px;height:1.1px;background:#7b4aa0;opacity:.42"></div><div class="a" style="left:1186.00px;top:370.00px;width:7.56px;height:1.1px;background:#4a5bc6;opacity:.42"></div><div class="a" style="left:1194.40px;top:370.00px;width:5.04px;height:1.1px;background:#7b4aa0;opacity:.42"></div><div class="a" style="left:1200.28px;top:370.00px;width:7.56px;height:1.1px;background:#7b4aa0;opacity:.42"></div><div class="a" style="left:1189.36px;top:371.70px;width:5.04px;height:1.1px;background:#555;opacity:.42"></div><div class="a" style="left:1189.36px;top:373.40px;width:6.72px;height:1.1px;background:#8c1f2f;opacity:.42"></div><div class="a" style="left:1196.92px;top:373.40px;width:2.52px;height:1.1px;background:#4f8a2f;opacity:.42"></div><div class="a" style="left:1200.28px;top:373.40px;width:4.20px;height:1.1px;background:#4a5bc6;opacity:.42"></div><div class="a" style="left:1187.68px;top:375.10px;width:5.04px;height:1.1px;background:#4f8a2f;opacity:.42"></div><div class="a" style="left:1193.56px;top:375.10px;width:7.56px;height:1.1px;background:#9b6b2b;opacity:.42"></div><div class="a" style="left:1201.96px;top:375.10px;width:7.56px;height:1.1px;background:#555;opacity:.42"></div><div class="a" style="left:1187.68px;top:378.50px;width:3.36px;height:1.1px;background:#7b4aa0;opacity:.42"></div><div class="a" style="left:1186.00px;top:380.20px;width:2.52px;height:1.1px;background:#7b4aa0;opacity:.42"></div><div class="a" style="left:1189.36px;top:380.20px;width:4.20px;height:1.1px;background:#7b4aa0;opacity:.42"></div><div class="a" style="left:1194.40px;top:380.20px;width:3.36px;height:1.1px;background:#7b4aa0;opacity:.42"></div><div class="a" style="left:1198.60px;top:380.20px;width:6.72px;height:1.1px;background:#555;opacity:.42"></div><div class="a" style="left:1189.36px;top:381.90px;width:3.36px;height:1.1px;background:#4a5bc6;opacity:.42"></div><div class="a" style="left:1193.56px;top:381.90px;width:3.36px;height:1.1px;background:#555;opacity:.42"></div><div class="a" style="left:1197.76px;top:381.90px;width:7.56px;height:1.1px;background:#9b6b2b;opacity:.42"></div><div class="a" style="left:1194.40px;top:383.60px;width:6.72px;height:1.1px;background:#9b6b2b;opacity:.42"></div><div class="a" style="left:1189.36px;top:385.30px;width:1.68px;height:1.1px;background:#4f8a2f;opacity:.42"></div><div class="a" style="left:1191.88px;top:385.30px;width:5.88px;height:1.1px;background:#4a5bc6;opacity:.42"></div><div class="a" style="left:1198.60px;top:385.30px;width:5.88px;height:1.1px;background:#4f8a2f;opacity:.42"></div><div class="a" style="left:1205.32px;top:385.30px;width:7.56px;height:1.1px;background:#7b4aa0;opacity:.42"></div><div class="a" style="left:1213.72px;top:385.30px;width:6.72px;height:1.1px;background:#4a5bc6;opacity:.42"></div><div class="a" style="left:1221.28px;top:385.30px;width:5.88px;height:1.1px;background:#4f8a2f;opacity:.42"></div><div class="a" style="left:1194.40px;top:387.00px;width:5.04px;height:1.1px;background:#8c1f2f;opacity:.42"></div><div class="a" style="left:1192.72px;top:388.70px;width:5.88px;height:1.1px;background:#8c1f2f;opacity:.42"></div><div class="a" style="left:1199.44px;top:388.70px;width:3.36px;height:1.1px;background:#4a5bc6;opacity:.42"></div><div class="a" style="left:1192.72px;top:390.40px;width:1.68px;height:1.1px;background:#4a5bc6;opacity:.42"></div><div class="a" style="left:1195.24px;top:390.40px;width:2.52px;height:1.1px;background:#7b4aa0;opacity:.42"></div><div class="a" style="left:1194.40px;top:392.10px;width:5.88px;height:1.1px;background:#9b6b2b;opacity:.42"></div><div class="a" style="left:1201.12px;top:392.10px;width:2.52px;height:1.1px;background:#9b6b2b;opacity:.42"></div><div class="a" style="left:1204.48px;top:392.10px;width:5.04px;height:1.1px;background:#a8701f;opacity:.42"></div><div class="a" style="left:1191.04px;top:393.80px;width:4.20px;height:1.1px;background:#8c1f2f;opacity:.42"></div><div class="a" style="left:1187.68px;top:395.50px;width:5.04px;height:1.1px;background:#7b4aa0;opacity:.42"></div><div class="a" style="left:1193.56px;top:395.50px;width:5.88px;height:1.1px;background:#7b4aa0;opacity:.42"></div><div class="a" style="left:1200.28px;top:395.50px;width:2.52px;height:1.1px;background:#7b4aa0;opacity:.42"></div><div class="a" style="left:1203.64px;top:395.50px;width:5.04px;height:1.1px;background:#9b6b2b;opacity:.42"></div><div class="a" style="left:1209.52px;top:395.50px;width:4.20px;height:1.1px;background:#9b6b2b;opacity:.42"></div><div class="a" style="left:1214.56px;top:395.50px;width:3.36px;height:1.1px;background:#7b4aa0;opacity:.42"></div><div class="a" style="left:1187.68px;top:397.20px;width:1.68px;height:1.1px;background:#555;opacity:.42"></div><div class="a" style="left:1190.20px;top:397.20px;width:3.36px;height:1.1px;background:#7b4aa0;opacity:.42"></div><div class="a" style="left:1194.40px;top:397.20px;width:5.04px;height:1.1px;background:#555;opacity:.42"></div><div class="a" style="left:1200.28px;top:397.20px;width:1.68px;height:1.1px;background:#7b4aa0;opacity:.42"></div><div class="a" style="left:1191.04px;top:398.90px;width:3.36px;height:1.1px;background:#8c1f2f;opacity:.42"></div><div class="a" style="left:1194.40px;top:400.60px;width:3.36px;height:1.1px;background:#9b6b2b;opacity:.42"></div><div class="a" style="left:1198.60px;top:400.60px;width:3.36px;height:1.1px;background:#4f8a2f;opacity:.42"></div><div class="a" style="left:1202.80px;top:400.60px;width:4.20px;height:1.1px;background:#9b6b2b;opacity:.42"></div><div class="a" style="left:1187.68px;top:404.00px;width:7.56px;height:1.1px;background:#7b4aa0;opacity:.42"></div><div class="a" style="left:1196.08px;top:404.00px;width:7.56px;height:1.1px;background:#9b6b2b;opacity:.42"></div><div class="a" style="left:1204.48px;top:404.00px;width:6.72px;height:1.1px;background:#555;opacity:.42"></div><div class="a" style="left:1191.04px;top:405.70px;width:6.72px;height:1.1px;background:#555;opacity:.42"></div><div class="a" style="left:1198.60px;top:405.70px;width:2.52px;height:1.1px;background:#7b4aa0;opacity:.42"></div><div class="a" style="left:1201.96px;top:405.70px;width:5.88px;height:1.1px;background:#8c1f2f;opacity:.42"></div><div class="a" style="left:1208.68px;top:405.70px;width:6.72px;height:1.1px;background:#555;opacity:.42"></div><div class="a" style="left:1189.36px;top:407.40px;width:5.04px;height:1.1px;background:#555;opacity:.42"></div><div class="a" style="left:1194.40px;top:409.10px;width:5.04px;height:1.1px;background:#7b4aa0;opacity:.42"></div><div class="a" style="left:1200.28px;top:409.10px;width:4.20px;height:1.1px;background:#7b4aa0;opacity:.42"></div><div class="a" style="left:1205.32px;top:409.10px;width:7.56px;height:1.1px;background:#4a5bc6;opacity:.42"></div><div class="a" style="left:1191.04px;top:410.80px;width:7.56px;height:1.1px;background:#7b4aa0;opacity:.42"></div><div class="a" style="left:1189.36px;top:412.50px;width:5.04px;height:1.1px;background:#555;opacity:.42"></div><div class="a" style="left:1195.24px;top:412.50px;width:4.20px;height:1.1px;background:#7b4aa0;opacity:.42"></div><div class="a" style="left:1200.28px;top:412.50px;width:5.88px;height:1.1px;background:#8c1f2f;opacity:.42"></div><div class="a" style="left:1207.00px;top:412.50px;width:6.72px;height:1.1px;background:#7b4aa0;opacity:.42"></div><div class="a" style="left:1214.56px;top:412.50px;width:4.20px;height:1.1px;background:#555;opacity:.42"></div><div class="a" style="left:1219.60px;top:412.50px;width:2.52px;height:1.1px;background:#7b4aa0;opacity:.42"></div><div class="a" style="left:1187.68px;top:415.90px;width:7.56px;height:1.1px;background:#7b4aa0;opacity:.42"></div><div class="a" style="left:1196.08px;top:415.90px;width:5.04px;height:1.1px;background:#4a5bc6;opacity:.42"></div><div class="a" style="left:1201.96px;top:415.90px;width:5.04px;height:1.1px;background:#7b4aa0;opacity:.42"></div><div class="a" style="left:1207.84px;top:415.90px;width:5.88px;height:1.1px;background:#7b4aa0;opacity:.42"></div><div class="a" style="left:1214.56px;top:415.90px;width:2.52px;height:1.1px;background:#a8701f;opacity:.42"></div><div class="a" style="left:1217.92px;top:415.90px;width:7.56px;height:1.1px;background:#8c1f2f;opacity:.42"></div><div class="a" style="left:1189.36px;top:417.60px;width:1.68px;height:1.1px;background:#4f8a2f;opacity:.42"></div><div class="a" style="left:1191.88px;top:417.60px;width:1.68px;height:1.1px;background:#a8701f;opacity:.42"></div><div class="a" style="left:1189.36px;top:419.30px;width:7.56px;height:1.1px;background:#7b4aa0;opacity:.42"></div><div class="a" style="left:1197.76px;top:419.30px;width:7.56px;height:1.1px;background:#4a5bc6;opacity:.42"></div><div class="a" style="left:1206.16px;top:419.30px;width:4.20px;height:1.1px;background:#4f8a2f;opacity:.42"></div><div class="a" style="left:1186.00px;top:421.00px;width:5.88px;height:1.1px;background:#9b6b2b;opacity:.42"></div><div class="a" style="left:1192.72px;top:421.00px;width:7.56px;height:1.1px;background:#7b4aa0;opacity:.42"></div><div class="a" style="left:1192.72px;top:422.70px;width:4.20px;height:1.1px;background:#4a5bc6;opacity:.42"></div><div class="a" style="left:1197.76px;top:422.70px;width:1.68px;height:1.1px;background:#7b4aa0;opacity:.42"></div><div class="a" style="left:1189.36px;top:424.40px;width:6.72px;height:1.1px;background:#7b4aa0;opacity:.42"></div><div class="a" style="left:1196.92px;top:424.40px;width:5.88px;height:1.1px;background:#a8701f;opacity:.42"></div><div class="a" style="left:1187.68px;top:426.10px;width:5.04px;height:1.1px;background:#7b4aa0;opacity:.42"></div><div class="a" style="left:1193.56px;top:426.10px;width:4.20px;height:1.1px;background:#4f8a2f;opacity:.42"></div><div class="a" style="left:1189.36px;top:427.80px;width:5.04px;height:1.1px;background:#4f8a2f;opacity:.42"></div><div class="a" style="left:1195.24px;top:427.80px;width:5.88px;height:1.1px;background:#8c1f2f;opacity:.42"></div><div class="a" style="left:1201.96px;top:427.80px;width:2.52px;height:1.1px;background:#8c1f2f;opacity:.42"></div><div class="a" style="left:1205.32px;top:427.80px;width:4.20px;height:1.1px;background:#4f8a2f;opacity:.42"></div><div class="a" style="left:1210.36px;top:427.80px;width:3.36px;height:1.1px;background:#4a5bc6;opacity:.42"></div><div class="a" style="left:1214.56px;top:427.80px;width:5.04px;height:1.1px;background:#7b4aa0;opacity:.42"></div><div class="a" style="left:1187.68px;top:429.50px;width:2.52px;height:1.1px;background:#a8701f;opacity:.42"></div><div class="a" style="left:1191.04px;top:429.50px;width:2.52px;height:1.1px;background:#8c1f2f;opacity:.42"></div><div class="a" style="left:1194.40px;top:429.50px;width:1.68px;height:1.1px;background:#7b4aa0;opacity:.42"></div><div class="a" style="left:1196.92px;top:429.50px;width:5.04px;height:1.1px;background:#8c1f2f;opacity:.42"></div><div class="a" style="left:1194.40px;top:431.20px;width:3.36px;height:1.1px;background:#4f8a2f;opacity:.42"></div><div class="a" style="left:1189.36px;top:432.90px;width:3.36px;height:1.1px;background:#4f8a2f;opacity:.42"></div><div class="a" style="left:1193.56px;top:432.90px;width:1.68px;height:1.1px;background:#7b4aa0;opacity:.42"></div><div class="a" style="left:1187.68px;top:434.60px;width:7.56px;height:1.1px;background:#555;opacity:.42"></div><div class="a" style="left:1186.00px;top:438.00px;width:2.52px;height:1.1px;background:#8c1f2f;opacity:.42"></div><div class="a" style="left:1189.36px;top:439.70px;width:7.56px;height:1.1px;background:#7b4aa0;opacity:.42"></div><div class="a" style="left:1197.76px;top:439.70px;width:5.04px;height:1.1px;background:#8c1f2f;opacity:.42"></div><div class="a" style="left:1203.64px;top:439.70px;width:3.36px;height:1.1px;background:#7b4aa0;opacity:.42"></div><div class="a" style="left:1191.04px;top:443.10px;width:5.04px;height:1.1px;background:#4a5bc6;opacity:.42"></div><div class="a" style="left:1196.92px;top:443.10px;width:5.04px;height:1.1px;background:#a8701f;opacity:.42"></div><div class="a" style="left:1202.80px;top:443.10px;width:4.20px;height:1.1px;background:#a8701f;opacity:.42"></div><div class="a" style="left:1207.84px;top:443.10px;width:5.04px;height:1.1px;background:#7b4aa0;opacity:.42"></div><div class="a" style="left:1213.72px;top:443.10px;width:4.20px;height:1.1px;background:#7b4aa0;opacity:.42"></div><div class="a" style="left:1218.76px;top:443.10px;width:7.56px;height:1.1px;background:#7b4aa0;opacity:.42"></div><div class="a" style="left:1194.40px;top:444.80px;width:7.56px;height:1.1px;background:#555;opacity:.42"></div><div class="a" style="left:1189.36px;top:446.50px;width:2.52px;height:1.1px;background:#7b4aa0;opacity:.42"></div><div class="a" style="left:1194.40px;top:448.20px;width:4.20px;height:1.1px;background:#7b4aa0;opacity:.42"></div><div class="a" style="left:1199.44px;top:448.20px;width:1.68px;height:1.1px;background:#4f8a2f;opacity:.42"></div><div class="a" style="left:1201.96px;top:448.20px;width:6.72px;height:1.1px;background:#7b4aa0;opacity:.42"></div><div class="a" style="left:1209.52px;top:448.20px;width:5.88px;height:1.1px;background:#8c1f2f;opacity:.42"></div><div class="a" style="left:1216.24px;top:448.20px;width:5.04px;height:1.1px;background:#a8701f;opacity:.42"></div><div class="a" style="left:1222.12px;top:448.20px;width:2.52px;height:1.1px;background:#8c1f2f;opacity:.42"></div><div class="a" style="left:1189.36px;top:449.90px;width:3.36px;height:1.1px;background:#a8701f;opacity:.42"></div><div class="a" style="left:1193.56px;top:449.90px;width:7.56px;height:1.1px;background:#7b4aa0;opacity:.42"></div><div class="a" style="left:1191.04px;top:451.60px;width:4.20px;height:1.1px;background:#7b4aa0;opacity:.42"></div><div class="a" style="left:1196.08px;top:451.60px;width:3.36px;height:1.1px;background:#a8701f;opacity:.42"></div><div class="a" style="left:1200.28px;top:451.60px;width:3.36px;height:1.1px;background:#7b4aa0;opacity:.42"></div><div class="a" style="left:1192.72px;top:453.30px;width:1.68px;height:1.1px;background:#4a5bc6;opacity:.42"></div><div class="a" style="left:1192.72px;top:455.00px;width:2.52px;height:1.1px;background:#555;opacity:.42"></div><div class="a" style="left:1191.04px;top:456.70px;width:2.52px;height:1.1px;background:#7b4aa0;opacity:.42"></div><div class="a" style="left:1194.40px;top:456.70px;width:4.20px;height:1.1px;background:#4f8a2f;opacity:.42"></div><div class="a" style="left:1199.44px;top:456.70px;width:5.04px;height:1.1px;background:#7b4aa0;opacity:.42"></div><div class="a" style="left:1189.36px;top:458.40px;width:7.56px;height:1.1px;background:#7b4aa0;opacity:.42"></div><div class="a" style="left:1197.76px;top:458.40px;width:4.20px;height:1.1px;background:#9b6b2b;opacity:.42"></div><div class="a" style="left:1202.80px;top:458.40px;width:5.04px;height:1.1px;background:#9b6b2b;opacity:.42"></div><div class="a" style="left:1194.40px;top:460.10px;width:1.68px;height:1.1px;background:#7b4aa0;opacity:.42"></div><div class="a" style="left:1196.92px;top:460.10px;width:6.72px;height:1.1px;background:#7b4aa0;opacity:.42"></div><div class="a" style="left:1194.40px;top:461.80px;width:7.56px;height:1.1px;background:#555;opacity:.42"></div><div class="a" style="left:1189.36px;top:463.50px;width:6.72px;height:1.1px;background:#7b4aa0;opacity:.42"></div><div class="a" style="left:1196.92px;top:463.50px;width:4.20px;height:1.1px;background:#555;opacity:.42"></div><div class="a" style="left:1201.96px;top:463.50px;width:5.88px;height:1.1px;background:#4a5bc6;opacity:.42"></div><div class="a" style="left:1192.72px;top:465.20px;width:7.56px;height:1.1px;background:#4a5bc6;opacity:.42"></div><div class="a" style="left:1194.40px;top:466.90px;width:5.04px;height:1.1px;background:#a8701f;opacity:.42"></div><div class="a" style="left:1200.28px;top:466.90px;width:7.56px;height:1.1px;background:#a8701f;opacity:.42"></div><div class="a" style="left:1208.68px;top:466.90px;width:3.36px;height:1.1px;background:#a8701f;opacity:.42"></div><div class="a" style="left:1212.88px;top:466.90px;width:4.20px;height:1.1px;background:#8c1f2f;opacity:.42"></div><div class="a" style="left:1187.68px;top:468.60px;width:5.04px;height:1.1px;background:#9b6b2b;opacity:.42"></div><div class="a" style="left:1194.40px;top:470.30px;width:3.36px;height:1.1px;background:#4f8a2f;opacity:.42"></div><div class="a" style="left:1194.40px;top:472.00px;width:5.04px;height:1.1px;background:#7b4aa0;opacity:.42"></div><div class="a" style="left:1200.28px;top:472.00px;width:5.88px;height:1.1px;background:#7b4aa0;opacity:.42"></div><div class="a" style="left:1189.36px;top:473.70px;width:4.20px;height:1.1px;background:#7b4aa0;opacity:.42"></div><div class="a" style="left:1191.04px;top:477.10px;width:2.52px;height:1.1px;background:#555;opacity:.42"></div><div class="a" style="left:1194.40px;top:477.10px;width:5.88px;height:1.1px;background:#4f8a2f;opacity:.42"></div><div class="a" style="left:1201.12px;top:477.10px;width:1.68px;height:1.1px;background:#4f8a2f;opacity:.42"></div><div class="a" style="left:1203.64px;top:477.10px;width:6.72px;height:1.1px;background:#4a5bc6;opacity:.42"></div><div class="a" style="left:1189.36px;top:478.80px;width:3.36px;height:1.1px;background:#7b4aa0;opacity:.42"></div><div class="a" style="left:1191.04px;top:480.50px;width:7.56px;height:1.1px;background:#8c1f2f;opacity:.42"></div><div class="a" style="left:1199.44px;top:480.50px;width:3.36px;height:1.1px;background:#8c1f2f;opacity:.42"></div><div class="a" style="left:1203.64px;top:480.50px;width:5.04px;height:1.1px;background:#9b6b2b;opacity:.42"></div><div class="a" style="left:1191.04px;top:482.20px;width:4.20px;height:1.1px;background:#4f8a2f;opacity:.42"></div><div class="a" style="left:1191.04px;top:483.90px;width:3.36px;height:1.1px;background:#555;opacity:.42"></div><div class="a" style="left:1195.24px;top:483.90px;width:5.88px;height:1.1px;background:#4a5bc6;opacity:.42"></div><div class="a" style="left:1201.96px;top:483.90px;width:2.52px;height:1.1px;background:#4f8a2f;opacity:.42"></div><div class="a" style="left:1194.40px;top:485.60px;width:3.36px;height:1.1px;background:#7b4aa0;opacity:.42"></div><div class="a" style="left:1198.60px;top:485.60px;width:1.68px;height:1.1px;background:#a8701f;opacity:.42"></div><div class="a" style="left:1189.36px;top:487.30px;width:4.20px;height:1.1px;background:#8c1f2f;opacity:.42"></div><div class="a" style="left:1187.68px;top:489.00px;width:4.20px;height:1.1px;background:#4f8a2f;opacity:.42"></div><div class="a" style="left:1192.72px;top:489.00px;width:2.52px;height:1.1px;background:#555;opacity:.42"></div><div class="a" style="left:1196.08px;top:489.00px;width:2.52px;height:1.1px;background:#555;opacity:.42"></div><div class="a" style="left:1191.04px;top:490.70px;width:5.88px;height:1.1px;background:#4f8a2f;opacity:.42"></div><div class="a" style="left:1197.76px;top:490.70px;width:7.56px;height:1.1px;background:#4f8a2f;opacity:.42"></div><div class="a" style="left:1206.16px;top:490.70px;width:4.20px;height:1.1px;background:#7b4aa0;opacity:.42"></div><div class="a" style="left:1189.36px;top:492.40px;width:3.36px;height:1.1px;background:#9b6b2b;opacity:.42"></div><div class="a" style="left:1193.56px;top:492.40px;width:4.20px;height:1.1px;background:#8c1f2f;opacity:.42"></div><div class="a" style="left:1198.60px;top:492.40px;width:2.52px;height:1.1px;background:#9b6b2b;opacity:.42"></div><div class="a" style="left:1201.96px;top:492.40px;width:6.72px;height:1.1px;background:#7b4aa0;opacity:.42"></div><div class="a" style="left:1189.36px;top:494.10px;width:5.04px;height:1.1px;background:#7b4aa0;opacity:.42"></div><div class="a" style="left:1195.24px;top:494.10px;width:6.72px;height:1.1px;background:#7b4aa0;opacity:.42"></div><div class="a" style="left:1202.80px;top:494.10px;width:5.88px;height:1.1px;background:#7b4aa0;opacity:.42"></div><div class="a" style="left:1209.52px;top:494.10px;width:6.72px;height:1.1px;background:#4f8a2f;opacity:.42"></div><div class="a" style="left:1217.08px;top:494.10px;width:1.68px;height:1.1px;background:#555;opacity:.42"></div><div class="a" style="left:1219.60px;top:494.10px;width:7.56px;height:1.1px;background:#4f8a2f;opacity:.42"></div><div class="a" style="left:1189.36px;top:495.80px;width:2.52px;height:1.1px;background:#7b4aa0;opacity:.42"></div><div class="a" style="left:1192.72px;top:495.80px;width:1.68px;height:1.1px;background:#9b6b2b;opacity:.42"></div><div class="a" style="left:1189.36px;top:497.50px;width:5.04px;height:1.1px;background:#7b4aa0;opacity:.42"></div><div class="a" style="left:1195.24px;top:497.50px;width:7.56px;height:1.1px;background:#555;opacity:.42"></div><div class="a" style="left:1189.36px;top:499.20px;width:4.20px;height:1.1px;background:#7b4aa0;opacity:.42"></div><div class="a" style="left:1194.40px;top:500.90px;width:6.72px;height:1.1px;background:#555;opacity:.42"></div><div class="a" style="left:1201.96px;top:500.90px;width:2.52px;height:1.1px;background:#4f8a2f;opacity:.42"></div><div class="a" style="left:1205.32px;top:500.90px;width:2.52px;height:1.1px;background:#a8701f;opacity:.42"></div><div class="a" style="left:1208.68px;top:500.90px;width:7.56px;height:1.1px;background:#555;opacity:.42"></div><div class="a" style="left:1217.08px;top:500.90px;width:6.72px;height:1.1px;background:#7b4aa0;opacity:.42"></div><div class="a" style="left:1224.64px;top:500.90px;width:3.36px;height:1.1px;background:#8c1f2f;opacity:.42"></div><div class="a" style="left:1191.04px;top:502.60px;width:7.56px;height:1.1px;background:#7b4aa0;opacity:.42"></div><div class="a" style="left:1199.44px;top:502.60px;width:3.36px;height:1.1px;background:#4a5bc6;opacity:.42"></div><div class="a" style="left:1203.64px;top:502.60px;width:5.04px;height:1.1px;background:#4a5bc6;opacity:.42"></div><div class="a" style="left:1189.36px;top:504.30px;width:1.68px;height:1.1px;background:#8c1f2f;opacity:.42"></div><div class="a" style="left:1191.88px;top:504.30px;width:6.72px;height:1.1px;background:#7b4aa0;opacity:.42"></div><div class="a" style="left:1191.04px;top:506.00px;width:2.52px;height:1.1px;background:#8c1f2f;opacity:.42"></div><div class="a" style="left:1194.40px;top:506.00px;width:5.88px;height:1.1px;background:#4f8a2f;opacity:.42"></div><div class="a" style="left:1201.12px;top:506.00px;width:5.88px;height:1.1px;background:#7b4aa0;opacity:.42"></div><div class="a" style="left:1207.84px;top:506.00px;width:1.68px;height:1.1px;background:#9b6b2b;opacity:.42"></div><div class="a" style="left:1210.36px;top:506.00px;width:4.20px;height:1.1px;background:#555;opacity:.42"></div><div class="a" style="left:1215.40px;top:506.00px;width:3.36px;height:1.1px;background:#4a5bc6;opacity:.42"></div><div class="a" style="left:1187.68px;top:507.70px;width:7.56px;height:1.1px;background:#4f8a2f;opacity:.42"></div><div class="a" style="left:1196.08px;top:507.70px;width:5.88px;height:1.1px;background:#555;opacity:.42"></div><div class="a" style="left:1202.80px;top:507.70px;width:5.04px;height:1.1px;background:#9b6b2b;opacity:.42"></div><div class="a" style="left:1192.72px;top:509.40px;width:4.20px;height:1.1px;background:#4a5bc6;opacity:.42"></div><div class="a" style="left:1197.76px;top:509.40px;width:5.88px;height:1.1px;background:#9b6b2b;opacity:.42"></div><div class="a" style="left:1204.48px;top:509.40px;width:3.36px;height:1.1px;background:#8c1f2f;opacity:.42"></div><div class="a" style="left:1208.68px;top:509.40px;width:3.36px;height:1.1px;background:#7b4aa0;opacity:.42"></div><div class="a" style="left:1187.68px;top:511.10px;width:2.52px;height:1.1px;background:#a8701f;opacity:.42"></div><div class="a" style="left:1191.04px;top:511.10px;width:7.56px;height:1.1px;background:#7b4aa0;opacity:.42"></div><div class="a" style="left:1191.04px;top:512.80px;width:1.68px;height:1.1px;background:#9b6b2b;opacity:.42"></div><div class="a" style="left:1193.56px;top:512.80px;width:5.04px;height:1.1px;background:#555;opacity:.42"></div><div class="a" style="left:1199.44px;top:512.80px;width:6.72px;height:1.1px;background:#4f8a2f;opacity:.42"></div><div class="a" style="left:1207.00px;top:512.80px;width:5.04px;height:1.1px;background:#9b6b2b;opacity:.42"></div><div class="a" style="left:1189.36px;top:514.50px;width:5.88px;height:1.1px;background:#4a5bc6;opacity:.42"></div><div class="a" style="left:1187.68px;top:516.20px;width:3.36px;height:1.1px;background:#4f8a2f;opacity:.42"></div><div class="a" style="left:1191.88px;top:516.20px;width:3.36px;height:1.1px;background:#7b4aa0;opacity:.42"></div><div class="a" style="left:1196.08px;top:516.20px;width:4.20px;height:1.1px;background:#555;opacity:.42"></div><div class="a" style="left:1189.36px;top:517.90px;width:3.36px;height:1.1px;background:#7b4aa0;opacity:.42"></div><div class="a" style="left:1193.56px;top:517.90px;width:7.56px;height:1.1px;background:#7b4aa0;opacity:.42"></div><div class="a" style="left:1189.36px;top:519.60px;width:5.04px;height:1.1px;background:#555;opacity:.42"></div><div class="a" style="left:1195.24px;top:519.60px;width:6.72px;height:1.1px;background:#7b4aa0;opacity:.42"></div><div class="a" style="left:1202.80px;top:519.60px;width:1.68px;height:1.1px;background:#7b4aa0;opacity:.42"></div><div class="a" style="left:1187.68px;top:521.30px;width:4.20px;height:1.1px;background:#4f8a2f;opacity:.42"></div><div class="a" style="left:1192.72px;top:523.00px;width:6.72px;height:1.1px;background:#9b6b2b;opacity:.42"></div><div class="a" style="left:1192.72px;top:524.70px;width:3.36px;height:1.1px;background:#9b6b2b;opacity:.42"></div><div class="a" style="left:1196.92px;top:524.70px;width:2.52px;height:1.1px;background:#4f8a2f;opacity:.42"></div><div class="a" style="left:1200.28px;top:524.70px;width:7.56px;height:1.1px;background:#4f8a2f;opacity:.42"></div><div class="a" style="left:1208.68px;top:524.70px;width:4.20px;height:1.1px;background:#555;opacity:.42"></div><div class="a" style="left:1191.04px;top:526.40px;width:6.72px;height:1.1px;background:#4a5bc6;opacity:.42"></div><div class="a" style="left:1187.68px;top:528.10px;width:3.36px;height:1.1px;background:#7b4aa0;opacity:.42"></div><div class="a" style="left:1191.88px;top:528.10px;width:5.04px;height:1.1px;background:#a8701f;opacity:.42"></div><div class="a" style="left:1197.76px;top:528.10px;width:6.72px;height:1.1px;background:#7b4aa0;opacity:.42"></div><div class="a" style="left:1205.32px;top:528.10px;width:3.36px;height:1.1px;background:#9b6b2b;opacity:.42"></div><div class="a" style="left:1189.36px;top:529.80px;width:5.04px;height:1.1px;background:#555;opacity:.42"></div><div class="a" style="left:1189.36px;top:531.50px;width:7.56px;height:1.1px;background:#4a5bc6;opacity:.42"></div><div class="a" style="left:1189.36px;top:533.20px;width:1.68px;height:1.1px;background:#7b4aa0;opacity:.42"></div><div class="a" style="left:1191.88px;top:533.20px;width:2.52px;height:1.1px;background:#7b4aa0;opacity:.42"></div><div class="a" style="left:1195.24px;top:533.20px;width:5.04px;height:1.1px;background:#7b4aa0;opacity:.42"></div><div class="a" style="left:1201.12px;top:533.20px;width:1.68px;height:1.1px;background:#7b4aa0;opacity:.42"></div><div class="a" style="left:1203.64px;top:533.20px;width:5.88px;height:1.1px;background:#a8701f;opacity:.42"></div><div class="a" style="left:1210.36px;top:533.20px;width:3.36px;height:1.1px;background:#4a5bc6;opacity:.42"></div><div class="a" style="left:1191.04px;top:534.90px;width:1.68px;height:1.1px;background:#555;opacity:.42"></div><div class="a" style="left:1193.56px;top:534.90px;width:5.88px;height:1.1px;background:#8c1f2f;opacity:.42"></div><div class="a" style="left:1200.28px;top:534.90px;width:6.72px;height:1.1px;background:#8c1f2f;opacity:.42"></div><div class="a" style="left:1207.84px;top:534.90px;width:1.68px;height:1.1px;background:#4a5bc6;opacity:.42"></div><div class="a" style="left:1194.40px;top:536.60px;width:5.04px;height:1.1px;background:#4a5bc6;opacity:.42"></div><div class="a" style="left:1200.28px;top:536.60px;width:5.04px;height:1.1px;background:#4a5bc6;opacity:.42"></div><div class="a" style="left:1191.04px;top:538.30px;width:3.36px;height:1.1px;background:#7b4aa0;opacity:.42"></div><div class="a" style="left:1192.72px;top:540.00px;width:2.52px;height:1.1px;background:#4f8a2f;opacity:.42"></div><div class="a" style="left:1192.72px;top:541.70px;width:2.52px;height:1.1px;background:#8c1f2f;opacity:.42"></div><div class="a" style="left:1196.08px;top:541.70px;width:7.56px;height:1.1px;background:#7b4aa0;opacity:.42"></div><div class="a" style="left:1187.68px;top:543.40px;width:1.68px;height:1.1px;background:#8c1f2f;opacity:.42"></div><div class="a" style="left:1190.20px;top:543.40px;width:5.04px;height:1.1px;background:#4a5bc6;opacity:.42"></div><div class="a" style="left:1196.08px;top:543.40px;width:7.56px;height:1.1px;background:#555;opacity:.42"></div><div class="a" style="left:1192.72px;top:545.10px;width:7.56px;height:1.1px;background:#555;opacity:.42"></div><div class="a" style="left:1191.04px;top:546.80px;width:1.68px;height:1.1px;background:#7b4aa0;opacity:.42"></div><div class="a" style="left:1193.56px;top:546.80px;width:3.36px;height:1.1px;background:#4a5bc6;opacity:.42"></div><div class="a" style="left:1189.36px;top:548.50px;width:5.04px;height:1.1px;background:#9b6b2b;opacity:.42"></div><div class="a" style="left:1195.24px;top:548.50px;width:7.56px;height:1.1px;background:#9b6b2b;opacity:.42"></div><div class="a" style="left:1203.64px;top:548.50px;width:5.04px;height:1.1px;background:#4f8a2f;opacity:.42"></div><div class="a" style="left:1209.52px;top:548.50px;width:2.52px;height:1.1px;background:#9b6b2b;opacity:.42"></div><div class="a" style="left:1212.88px;top:548.50px;width:2.52px;height:1.1px;background:#4f8a2f;opacity:.42"></div><div class="a" style="left:1216.24px;top:548.50px;width:5.88px;height:1.1px;background:#4a5bc6;opacity:.42"></div><div class="a" style="left:1189.36px;top:550.20px;width:3.36px;height:1.1px;background:#8c1f2f;opacity:.42"></div><div class="a" style="left:1189.36px;top:551.90px;width:5.88px;height:1.1px;background:#7b4aa0;opacity:.42"></div><div class="a" style="left:1189.36px;top:553.60px;width:3.36px;height:1.1px;background:#555;opacity:.42"></div><div class="a" style="left:1193.56px;top:553.60px;width:1.68px;height:1.1px;background:#7b4aa0;opacity:.42"></div><div class="a" style="left:1196.08px;top:553.60px;width:6.72px;height:1.1px;background:#8c1f2f;opacity:.42"></div><div class="a" style="left:1189.36px;top:558.70px;width:3.36px;height:1.1px;background:#9b6b2b;opacity:.42"></div><div class="a" style="left:1194.40px;top:562.10px;width:6.72px;height:1.1px;background:#a8701f;opacity:.42"></div><div class="a" style="left:1201.96px;top:562.10px;width:4.20px;height:1.1px;background:#a8701f;opacity:.42"></div><div class="a" style="left:1207.00px;top:562.10px;width:6.72px;height:1.1px;background:#7b4aa0;opacity:.42"></div><div class="a" style="left:1187.68px;top:563.80px;width:5.88px;height:1.1px;background:#7b4aa0;opacity:.42"></div><div class="a" style="left:1194.40px;top:563.80px;width:5.88px;height:1.1px;background:#8c1f2f;opacity:.42"></div><div class="a" style="left:1201.12px;top:563.80px;width:1.68px;height:1.1px;background:#7b4aa0;opacity:.42"></div><div class="a" style="left:1191.04px;top:565.50px;width:4.20px;height:1.1px;background:#9b6b2b;opacity:.42"></div><div class="a" style="left:1191.04px;top:567.20px;width:2.52px;height:1.1px;background:#7b4aa0;opacity:.42"></div><div class="a" style="left:1194.40px;top:567.20px;width:7.56px;height:1.1px;background:#555;opacity:.42"></div><div class="a" style="left:1202.80px;top:567.20px;width:7.56px;height:1.1px;background:#555;opacity:.42"></div><div class="a" style="left:1211.20px;top:567.20px;width:6.72px;height:1.1px;background:#8c1f2f;opacity:.42"></div><div class="a" style="left:1218.76px;top:567.20px;width:4.20px;height:1.1px;background:#555;opacity:.42"></div><div class="a" style="left:1223.80px;top:567.20px;width:1.68px;height:1.1px;background:#8c1f2f;opacity:.42"></div><div class="a" style="left:1192.72px;top:568.90px;width:7.56px;height:1.1px;background:#4f8a2f;opacity:.42"></div><div class="a" style="left:1201.12px;top:568.90px;width:1.68px;height:1.1px;background:#7b4aa0;opacity:.42"></div><div class="a" style="left:1203.64px;top:568.90px;width:5.88px;height:1.1px;background:#7b4aa0;opacity:.42"></div><div class="a" style="left:1210.36px;top:568.90px;width:7.56px;height:1.1px;background:#9b6b2b;opacity:.42"></div><div class="a" style="left:1194.40px;top:570.60px;width:4.20px;height:1.1px;background:#a8701f;opacity:.42"></div><div class="a" style="left:1199.44px;top:570.60px;width:6.72px;height:1.1px;background:#7b4aa0;opacity:.42"></div><div class="a" style="left:1207.00px;top:570.60px;width:3.36px;height:1.1px;background:#a8701f;opacity:.42"></div><div class="a" style="left:1187.68px;top:574.00px;width:2.52px;height:1.1px;background:#8c1f2f;opacity:.42"></div><div class="a" style="left:1189.36px;top:575.70px;width:3.36px;height:1.1px;background:#7b4aa0;opacity:.42"></div><div class="a" style="left:1189.36px;top:577.40px;width:5.88px;height:1.1px;background:#a8701f;opacity:.42"></div><div class="a" style="left:1196.08px;top:577.40px;width:4.20px;height:1.1px;background:#8c1f2f;opacity:.42"></div><div class="a" style="left:1201.12px;top:577.40px;width:1.68px;height:1.1px;background:#555;opacity:.42"></div><div class="a" style="left:1203.64px;top:577.40px;width:4.20px;height:1.1px;background:#a8701f;opacity:.42"></div><div class="a" style="left:1208.68px;top:577.40px;width:5.04px;height:1.1px;background:#4a5bc6;opacity:.42"></div><div class="a" style="left:1214.56px;top:577.40px;width:2.52px;height:1.1px;background:#7b4aa0;opacity:.42"></div>
<div class="a" style="left:1186px;top:99.3px;width:78px;height:2.0px;background:#d9a93a;opacity:.85"></div>
<div class="a" style="left:1186px;top:219px;width:78px;height:2px;background:#d9a93a;opacity:.85"></div>
<div class="a" style="left:1186px;top:529px;width:78px;height:2px;background:#d9a93a;opacity:.85"></div>
<div class="a" style="left:1275px;top:99px;width:4px;height:5px;background:#c8961a;"></div>
<div class="a" style="left:1276px;top:243px;width:3px;height:5px;background:#c8961a;"></div>
<div class="a" style="left:1276px;top:620px;width:3px;height:6px;background:#c8961a;"></div>
<div class="t" style="left:390px;top:762.1px;height:16.799999999999997px;line-height:16.799999999999997px;font-size:12.0px;color:#666;">问题</div>
<div class="a" style="left:417.5px;top:762px;width:17px;height:17px;border-radius:50%;background:#6f5497;color:#fff;font-size:10.5px;text-align:center;line-height:17px">5</div>
<div class="t" style="left:457px;top:762.1px;height:16.799999999999997px;line-height:16.799999999999997px;font-size:12.0px;color:#666;">输出</div>
<div class="t" style="left:507px;top:762.1px;height:16.799999999999997px;line-height:16.799999999999997px;font-size:12.0px;color:#666;">调试控制台</div>
<div class="t" style="left:590px;top:762.1px;height:16.799999999999997px;line-height:16.799999999999997px;font-size:12.0px;color:#333;">终端</div>
<div class="a" style="left:588px;top:781.5px;width:28px;height:1.5px;background:#6b6b6b;"></div>
<div class="t" style="left:639px;top:762.1px;height:16.799999999999997px;line-height:16.799999999999997px;font-size:12.0px;color:#666;">端口</div>
<svg style="left:1141px;top:763px;" width="15" height="15" viewBox="0 0 15 15"><path d="M7.5 0.5 V14.5 M0.5 7.5 H14.5" stroke="#333" stroke-width="1.15"/></svg>
<svg style="left:1160px;top:766px;" width="10" height="8" viewBox="0 0 10 8"><path d="M1 2 L5 6 L9 2" stroke="#555" stroke-width="1.1" fill="none"/></svg>
<svg style="left:1180px;top:768px;" width="18" height="5" viewBox="0 0 18 5"><circle cx="2.5" cy="2.5" r="1.2" fill="#333"/><circle cx="8.5" cy="2.5" r="1.2" fill="#333"/><circle cx="14.5" cy="2.5" r="1.2" fill="#333"/></svg>
<div class="a" style="left:1207.5px;top:762px;width:1.0px;height:17px;background:#c9c9c9;"></div>
<svg style="left:1221px;top:764px;" width="15" height="13" viewBox="0 0 15 13"><path d="M0.8 4.5 V0.8 H4.5 M9.5 0.8 H13.2 V4.5 M13.2 8.5 V12.2 H9.5 M4.5 12.2 H0.8 V8.5" stroke="#444" stroke-width="1.25" fill="none"/></svg>
<svg style="left:1250px;top:765px;" width="11" height="11" viewBox="0 0 11 11"><path d="M0.5 0.5 L10 10 M10 0.5 L0.5 10" stroke="#333" stroke-width="1.1"/></svg>
<div class="t" style="left:390px;top:815.26px;height:18.479999999999997px;line-height:18.479999999999997px;font-size:13.2px;color:#444;font-family:'Liberation Mono',monospace;letter-spacing:-0.17px">C:\Users\shiuo\Desktop\<span style="font-size:14.6px;letter-spacing:0">基础接入</span>demo&gt;</div>
<div class="a" style="left:1139px;top:796px;width:1px;height:37px;background:#dedede;"></div>
<div class="a" style="left:1139px;top:796px;width:15px;height:1px;background:#dedede;"></div>
<div class="a" style="left:1153.5px;top:788.5px;width:125.5px;height:44.5px;background:#f3f3f3;border-left:1px solid #dcdcdc;border-top:1px solid #e4e4e4"></div>
<div class="a" style="left:1154.5px;top:810.5px;width:124.5px;height:22.5px;background:#d4dccb;"></div>
<svg style="left:1165px;top:790.5px;" width="16" height="16" viewBox="0 0 16 16"><rect x="0.8" y="0.8" width="14" height="14" rx="1.5" stroke="#555" stroke-width="1.2" fill="none"/><path d="M3.5 4.5 L6.5 7.5 L3.5 10.5 M7.5 11.5 H12" stroke="#555" stroke-width="1.2" fill="none"/></svg>
<div class="t" style="left:1185px;top:790.12px;height:18.759999999999998px;line-height:18.759999999999998px;font-size:13.4px;color:#555;">powershell</div>
<svg style="left:1165px;top:814px;" width="16" height="16" viewBox="0 0 16 16"><rect x="0.8" y="0.8" width="14" height="14" rx="1" stroke="#555" stroke-width="1.2" fill="none"/><path d="M1 3.5 H15" stroke="#555" stroke-width="1.2"/><text x="2.5" y="12" font-size="5.5" fill="#555" font-family="Liberation Sans">C:\</text></svg>
<div class="t" style="left:1185px;top:813.12px;height:18.759999999999998px;line-height:18.759999999999998px;font-size:13.4px;color:#555;">cmd</div>
<svg style="left:10px;top:835px;" width="16" height="18" viewBox="0 0 16 18"><path d="M2.9 6.5 L8.3 10.8 L2.9 15.1 M12.8 2.2 L8.5 6.5 L12.8 10.8" stroke="#fff" stroke-width="1.3" fill="none"/></svg>
<svg style="left:44px;top:836px;" width="16" height="16" viewBox="0 0 16 16"><circle cx="8" cy="8" r="6.4" stroke="#fff" stroke-width="1.2" fill="none"/><path d="M5.5 5.5 L10.5 10.5 M10.5 5.5 L5.5 10.5" stroke="#fff" stroke-width="1.2"/></svg>
<div class="t" style="left:62px;top:835.04px;height:17.919999999999998px;line-height:17.919999999999998px;font-size:12.8px;color:#fff;">0</div>
<svg style="left:73px;top:836px;" width="16" height="16" viewBox="0 0 16 16"><path d="M8 1.5 L14.8 14 H1.2 Z" stroke="#fff" stroke-width="1.2" fill="none" stroke-linejoin="round"/><path d="M8 6 V10.5 M8 11.8 V13" stroke="#fff" stroke-width="1.2"/></svg>
<div class="t" style="left:91px;top:835.04px;height:17.919999999999998px;line-height:17.919999999999998px;font-size:12.8px;color:#fff;">5</div>
<div class="t" style="left:895px;top:835.75px;height:17.5px;line-height:17.5px;font-size:12.5px;color:#fff;">行 1，列 1</div>
<div class="t" style="left:971px;top:835.75px;height:17.5px;line-height:17.5px;font-size:12.5px;color:#fff;">空格: 2</div>
<div class="t" style="left:1026px;top:835.75px;height:17.5px;line-height:17.5px;font-size:12.5px;color:#fff;">UTF-8</div>
<div class="t" style="left:1076px;top:835.75px;height:17.5px;line-height:17.5px;font-size:12.5px;color:#fff;">CRLF</div>
<div class="t" style="left:1122px;top:834.4px;height:18.2px;line-height:18.2px;font-size:13px;color:#fff;">{ }</div>
<div class="t" style="left:1142px;top:835.75px;height:17.5px;line-height:17.5px;font-size:12.5px;color:#fff;">TypeScript</div>
<svg style="left:1216px;top:836px;" width="18" height="16" viewBox="0 0 18 16"><circle cx="6" cy="4.8" r="3.6" fill="#fff"/><circle cx="12" cy="4.8" r="3.6" fill="#fff"/><ellipse cx="9" cy="10.5" rx="8.2" ry="4.6" fill="#fff"/><circle cx="6" cy="4.6" r="1.6" fill="#6f5497"/><circle cx="12" cy="4.6" r="1.6" fill="#6f5497"/><path d="M3.8 9.2 H14.2 V13 Q9 14.5 3.8 13 Z" fill="#6f5497"/><rect x="6.6" y="10" width="1.6" height="2.6" fill="#fff"/><rect x="9.8" y="10" width="1.6" height="2.6" fill="#fff"/></svg>
<svg style="left:1250px;top:836px;" width="17" height="17" viewBox="0 0 17 17"><path d="M8 2.5 C5 2.5 3.5 5 3.5 7.5 V11 L2 13 H14 L12.5 11 V8" stroke="#fff" stroke-width="1.3" fill="none"/><path d="M6.5 14 Q8 16 9.5 14" stroke="#fff" stroke-width="1.3" fill="none"/><circle cx="12.5" cy="4" r="2.8" fill="#fff"/></svg>
</div></body></html>
